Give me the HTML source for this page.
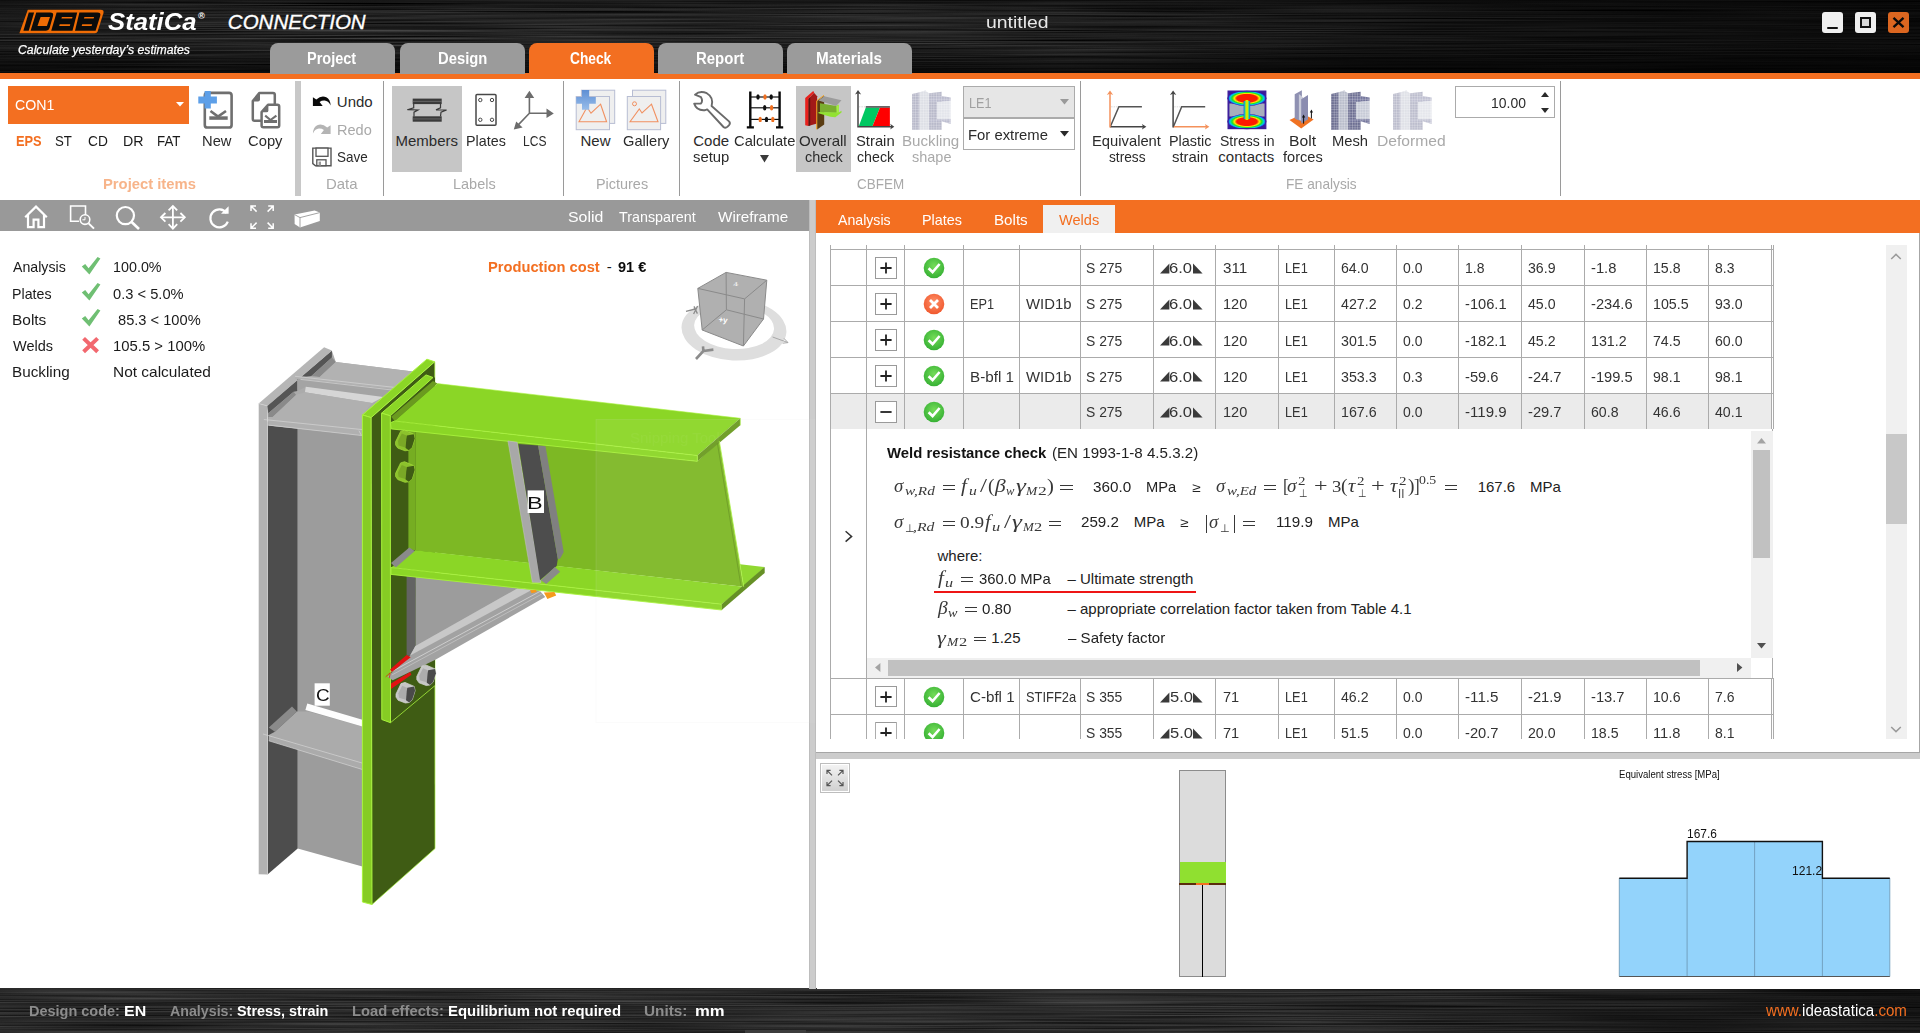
<!DOCTYPE html>
<html lang="en"><head><meta charset="utf-8"><title>IDEA StatiCa Connection - untitled</title>
<style>
html,body{margin:0;padding:0;background:#fff;}
body{width:1920px;height:1033px;overflow:hidden;font-family:"Liberation Sans",sans-serif;}
#app{position:relative;width:1920px;height:1033px;overflow:hidden;background:#fff;}
.t{position:absolute;white-space:nowrap;line-height:1;transform-origin:0 0;}
.b{position:absolute;box-sizing:border-box;}
svg{overflow:visible;}
</style></head><body><div id="app">
<svg class="b" style="left:0;top:0" width="1920" height="74" viewBox="0 0 1920 74" preserveAspectRatio="none">
<defs>
<filter id="brush" color-interpolation-filters="sRGB" x="0" y="0" width="100%" height="100%"><feTurbulence type="fractalNoise" baseFrequency="0.004 0.7" numOctaves="2" seed="7"/><feColorMatrix type="matrix" values="0.2 0.2 0.2 0 -0.16  0.2 0.2 0.2 0 -0.16  0.2 0.2 0.2 0 -0.16  0 0 0 0 1"/></filter>
<linearGradient id="tbg" x1="0" x2="1" y1="0" y2="0"><stop offset="0" stop-color="#000" stop-opacity="0.25"/><stop offset="0.1" stop-color="#000" stop-opacity="0.05"/><stop offset="0.55" stop-color="#000" stop-opacity="0.08"/><stop offset="0.75" stop-color="#000" stop-opacity="0.5"/><stop offset="1" stop-color="#000" stop-opacity="0.68"/></linearGradient>
<linearGradient id="tbv" x1="0" x2="0" y1="0" y2="1"><stop offset="0" stop-color="#000" stop-opacity="0.35"/><stop offset="0.18" stop-color="#000" stop-opacity="0"/><stop offset="0.6" stop-color="#000" stop-opacity="0"/><stop offset="1" stop-color="#000" stop-opacity="0.7"/></linearGradient>
<linearGradient id="sbg" x1="0" x2="1" y1="0" y2="0"><stop offset="0" stop-color="#000" stop-opacity="0.1"/><stop offset="0.68" stop-color="#000" stop-opacity="0.1"/><stop offset="0.85" stop-color="#000" stop-opacity="0.42"/><stop offset="1" stop-color="#000" stop-opacity="0.52"/></linearGradient>
</defs>
<rect width="1920" height="74" fill="#1c1c1c"/>
<rect width="1920" height="74" filter="url(#brush)"/>
<rect width="1920" height="74" fill="url(#tbg)"/><rect width="1920" height="74" fill="url(#tbv)"/>
</svg>
<div class="b" style="left:0px;top:73px;width:1920px;height:6px;background:#f36f21;"></div>
<svg class="b" style="left:0;top:988" width="1920" height="45" viewBox="0 0 1920 45" preserveAspectRatio="none">
<defs><filter id="brush2" color-interpolation-filters="sRGB" x="0" y="0" width="100%" height="100%"><feTurbulence type="fractalNoise" baseFrequency="0.004 0.7" numOctaves="2" seed="3"/><feColorMatrix type="matrix" values="0.2 0.2 0.2 0 -0.12  0.2 0.2 0.2 0 -0.12  0.2 0.2 0.2 0 -0.12  0 0 0 0 1"/></filter></defs>
<rect width="1920" height="45" fill="#141414"/><rect width="1920" height="45" filter="url(#brush2)"/>
<rect width="1920" height="45" fill="url(#sbg)"/>
</svg>
<div class="b" style="left:270px;top:43px;width:125px;height:31px;background:#9b9b9b;border-radius:8px 8px 0 0;"></div>
<span class="t" style="left:307.33px;top:50.66px;font-size:16px;color:#fff;font-weight:700;transform:scaleX(0.9061);">Project</span>
<div class="b" style="left:400px;top:43px;width:125px;height:31px;background:#9b9b9b;border-radius:8px 8px 0 0;"></div>
<span class="t" style="left:438.31px;top:50.66px;font-size:16px;color:#fff;font-weight:700;transform:scaleX(0.9243);">Design</span>
<div class="b" style="left:529px;top:43px;width:125px;height:31px;background:#f36f21;border-radius:8px 8px 0 0;"></div>
<span class="t" style="left:570.44px;top:50.66px;font-size:16px;color:#fff;font-weight:700;transform:scaleX(0.8590);">Check</span>
<div class="b" style="left:658px;top:43px;width:125px;height:31px;background:#9b9b9b;border-radius:8px 8px 0 0;"></div>
<span class="t" style="left:696.30px;top:50.66px;font-size:16px;color:#fff;font-weight:700;transform:scaleX(0.9346);">Report</span>
<div class="b" style="left:787px;top:43px;width:125px;height:31px;background:#9b9b9b;border-radius:8px 8px 0 0;"></div>
<span class="t" style="left:816.28px;top:50.66px;font-size:16px;color:#fff;font-weight:700;transform:scaleX(0.9521);">Materials</span>
<span class="t" style="left:985.74px;top:14.11px;font-size:17px;color:#e8e8e8;transform:scaleX(1.1403);">untitled</span>
<div class="b" style="left:1822px;top:12px;width:21px;height:21px;background:#efefef;border-radius:3px;"></div>
<div class="b" style="left:1827px;top:27px;width:11px;height:2.4px;background:#111;border-radius:1px;"></div>
<div class="b" style="left:1855px;top:12px;width:21px;height:21px;background:#efefef;border-radius:3px;"></div>
<div class="b" style="left:1860px;top:17px;width:11px;height:11px;background:#d9d9d9;border:2px solid #111;border-top-width:2.6px;"></div>
<div class="b" style="left:1888px;top:12px;width:21px;height:21px;background:#db6620;border-radius:3px;"></div>
<svg class="b" style="left:1888px;top:12px;" width="21" height="21" viewBox="0 0 21 21"><path d="M5.5 5.8 L15.5 15.2 M15.5 5.8 L5.5 15.2" stroke="#0a0a0a" stroke-width="2.3" fill="none"/></svg>
<svg class="b" style="left:0px;top:0px;" width="120" height="40" viewBox="0 0 120 40"><path d="M27.8 9.8 H100.6 Q104.4 9.8 103.4 13.2 L97.6 31.6 Q96.9 33.3 95 33.3 H19.4 Z" fill="#ef6c05"/>
<g fill="#0b0b0b"><path d="M28.75 12.6 H34.1 L28.75 30.75 H23.4 Z"/>
<path d="M36.25 12.6 H50 Q54 12.6 53 16 L49.6 28 Q48.8 30.75 46 30.75 H30.6 Z"/>
<path d="M56.6 12.6 H77.2 L72.5 30.75 H51.25 Z"/>
<path d="M79.4 12.6 H97.4 Q101.2 12.6 100.2 16 L95.6 30.75 H75 Z"/></g>
<g fill="#ef6c05"><path d="M40.6 17 H50 L46.9 26.1 H37.5 Z"/>
<path d="M61.9 17 H72.5 L72.1 18.5 H61.4 Z M59.7 24.2 H70.3 L69.8 26.1 H59.2 Z"/>
<path d="M84.4 17 H94.1 L93.6 18.5 H83.9 Z M82.2 24.2 H92.2 L91.6 26.1 H81.7 Z"/></g></svg>
<span class="t" style="left:107.69px;top:9.86px;font-size:24.5px;color:#fff;font-weight:700;font-style:italic;transform:scaleX(1.0493);">StatiCa</span>
<span class="t" style="left:198.00px;top:11.88px;font-size:9px;color:#fff;font-weight:700;font-style:italic;">®</span>
<span class="t" style="left:227.87px;top:11.95px;font-size:20.5px;color:#fff;font-style:italic;-webkit-text-stroke:0.35px #fff;">CONNECTION</span>
<span class="t" style="left:18.32px;top:43.59px;font-size:12.3px;color:#fff;font-style:italic;transform:scaleX(0.9953);-webkit-text-stroke:0.25px #fff;">Calculate yesterday’s estimates</span>
<div class="b" style="left:0px;top:79px;width:1920px;height:117px;background:#fff;"></div>
<div class="b" style="left:0px;top:196px;width:1920px;height:4px;background:#fff;"></div>
<div class="b" style="left:295px;top:81px;width:6px;height:115px;background:#c8c8c8;"></div>
<div class="b" style="left:383px;top:81px;width:1px;height:115px;background:#9a9a9a;"></div>
<div class="b" style="left:563px;top:81px;width:1px;height:115px;background:#9a9a9a;"></div>
<div class="b" style="left:679px;top:81px;width:1px;height:115px;background:#9a9a9a;"></div>
<div class="b" style="left:1080px;top:81px;width:1px;height:115px;background:#9a9a9a;"></div>
<div class="b" style="left:1560px;top:81px;width:1px;height:115px;background:#9a9a9a;"></div>
<div class="b" style="left:8px;top:86px;width:181px;height:38px;background:#f36f21;"></div>
<span class="t" style="left:15.28px;top:97.08px;font-size:15.5px;color:#fff;transform:scaleX(0.9152);">CON1</span>
<svg class="b" style="left:176px;top:102px;" width="8" height="5" viewBox="0 0 8 5"><path d="M0 0 H8 L4 4.5 Z" fill="#fff"/></svg>
<span class="t" style="left:15.84px;top:133.10px;font-size:15px;color:#f36f21;font-weight:700;transform:scaleX(0.8549);">EPS</span>
<span class="t" style="left:55.40px;top:133.10px;font-size:15px;color:#1a1a1a;transform:scaleX(0.8819);">ST</span>
<span class="t" style="left:87.80px;top:133.10px;font-size:15px;color:#1a1a1a;transform:scaleX(0.9165);">CD</span>
<span class="t" style="left:122.83px;top:133.10px;font-size:15px;color:#1a1a1a;transform:scaleX(0.9473);">DR</span>
<span class="t" style="left:156.91px;top:133.10px;font-size:15px;color:#1a1a1a;transform:scaleX(0.8866);">FAT</span>
<span class="t" style="left:202.49px;top:133.10px;font-size:15px;color:#2b2b2b;transform:scaleX(0.9822);">New</span>
<span class="t" style="left:248.25px;top:133.10px;font-size:15px;color:#2b2b2b;transform:scaleX(0.9846);">Copy</span>
<span class="t" style="left:102.51px;top:175.80px;font-size:15px;color:#f7b48a;font-weight:700;transform:scaleX(0.9861);">Project items</span>
<span class="t" style="left:336.85px;top:93.50px;font-size:15px;color:#2b2b2b;">Undo</span>
<span class="t" style="left:336.81px;top:121.50px;font-size:15px;color:#a9a9a9;transform:scaleX(0.9706);">Redo</span>
<span class="t" style="left:337.39px;top:149.20px;font-size:15px;color:#2b2b2b;transform:scaleX(0.8983);">Save</span>
<span class="t" style="left:326.48px;top:175.80px;font-size:15px;color:#a9a9a9;transform:scaleX(0.9949);">Data</span>
<div class="b" style="left:392px;top:86px;width:70px;height:86px;background:#c6c6c6;"></div>
<span class="t" style="left:395.47px;top:133.10px;font-size:15px;color:#2b2b2b;">Members</span>
<span class="t" style="left:466.33px;top:133.10px;font-size:15px;color:#2b2b2b;transform:scaleX(0.9545);">Plates</span>
<span class="t" style="left:522.71px;top:133.10px;font-size:15px;color:#2b2b2b;transform:scaleX(0.8034);">LCS</span>
<span class="t" style="left:453.41px;top:175.80px;font-size:15px;color:#a9a9a9;transform:scaleX(0.9663);">Labels</span>
<span class="t" style="left:580.47px;top:133.10px;font-size:15px;color:#2b2b2b;">New</span>
<span class="t" style="left:623.26px;top:133.10px;font-size:15px;color:#2b2b2b;transform:scaleX(0.9758);">Gallery</span>
<span class="t" style="left:596.12px;top:175.80px;font-size:15px;color:#a9a9a9;transform:scaleX(0.9616);">Pictures</span>
<span class="t" style="left:693.24px;top:133.10px;font-size:15px;color:#2b2b2b;">Code</span>
<span class="t" style="left:692.59px;top:148.90px;font-size:15px;color:#2b2b2b;transform:scaleX(0.9903);">setup</span>
<span class="t" style="left:734.45px;top:133.10px;font-size:15px;color:#2b2b2b;transform:scaleX(0.9819);">Calculate</span>
<svg class="b" style="left:760.3px;top:155.2px;" width="9" height="7.5" viewBox="0 0 9 7.5"><path d="M0 0 H9 L4.5 7.5 Z" fill="#3a3a3a"/></svg>
<div class="b" style="left:796px;top:86px;width:55px;height:86px;background:#c6c6c6;"></div>
<span class="t" style="left:799.29px;top:133.10px;font-size:15px;color:#2b2b2b;transform:scaleX(1.0044);">Overall</span>
<span class="t" style="left:804.79px;top:148.90px;font-size:15px;color:#2b2b2b;transform:scaleX(0.9619);">check</span>
<span class="t" style="left:855.83px;top:133.10px;font-size:15px;color:#2b2b2b;transform:scaleX(0.9859);">Strain</span>
<span class="t" style="left:856.90px;top:148.90px;font-size:15px;color:#2b2b2b;transform:scaleX(0.9464);">check</span>
<span class="t" style="left:902.26px;top:133.10px;font-size:15px;color:#a9a9a9;transform:scaleX(1.0092);">Buckling</span>
<span class="t" style="left:911.60px;top:148.90px;font-size:15px;color:#a9a9a9;transform:scaleX(0.9652);">shape</span>
<span class="t" style="left:857.32px;top:175.80px;font-size:15px;color:#a9a9a9;transform:scaleX(0.8969);">CBFEM</span>
<div class="b" style="left:963px;top:86px;width:112px;height:32px;background:#e6e6e6;border:1px solid #ababab;"></div>
<span class="t" style="left:968.56px;top:94.80px;font-size:15px;color:#a0a0a0;transform:scaleX(0.8412);">LE1</span>
<svg class="b" style="left:1060px;top:99px;" width="9" height="5.5" viewBox="0 0 9 5.5"><path d="M0 0 H9 L4.5 5.5 Z" fill="#9a9a9a"/></svg>
<div class="b" style="left:963px;top:118px;width:112px;height:32px;background:#fff;border:1px solid #ababab;"></div>
<span class="t" style="left:968.38px;top:126.80px;font-size:15px;color:#2b2b2b;transform:scaleX(0.9892);">For extreme</span>
<svg class="b" style="left:1060px;top:131px;" width="9" height="5.5" viewBox="0 0 9 5.5"><path d="M0 0 H9 L4.5 5.5 Z" fill="#2a2a2a"/></svg>
<span class="t" style="left:1091.79px;top:133.10px;font-size:15px;color:#2b2b2b;transform:scaleX(0.9839);">Equivalent</span>
<span class="t" style="left:1108.62px;top:148.90px;font-size:15px;color:#2b2b2b;transform:scaleX(0.9143);">stress</span>
<span class="t" style="left:1168.52px;top:133.10px;font-size:15px;color:#2b2b2b;transform:scaleX(0.9611);">Plastic</span>
<span class="t" style="left:1171.59px;top:148.90px;font-size:15px;color:#2b2b2b;transform:scaleX(0.9918);">strain</span>
<span class="t" style="left:1219.86px;top:133.10px;font-size:15px;color:#2b2b2b;transform:scaleX(0.9366);">Stress in</span>
<span class="t" style="left:1218.36px;top:148.90px;font-size:15px;color:#2b2b2b;">contacts</span>
<span class="t" style="left:1288.71px;top:133.10px;font-size:15px;color:#2b2b2b;transform:scaleX(1.0446);">Bolt</span>
<span class="t" style="left:1282.59px;top:148.90px;font-size:15px;color:#2b2b2b;transform:scaleX(0.9728);">forces</span>
<span class="t" style="left:1332.29px;top:133.10px;font-size:15px;color:#2b2b2b;transform:scaleX(0.9833);">Mesh</span>
<span class="t" style="left:1377.32px;top:133.10px;font-size:15px;color:#a9a9a9;transform:scaleX(1.0430);">Deformed</span>
<span class="t" style="left:1285.58px;top:175.80px;font-size:15px;color:#a9a9a9;transform:scaleX(0.9108);">FE analysis</span>
<div class="b" style="left:1455px;top:86px;width:100px;height:32px;background:#fff;border:1px solid #ababab;"></div>
<span class="t" style="left:1491.34px;top:94.80px;font-size:15px;color:#2b2b2b;transform:scaleX(0.9300);">10.00</span>
<svg class="b" style="left:1540.5px;top:92px;" width="8" height="5" viewBox="0 0 8 5"><path d="M0 5 H8 L4 0 Z" fill="#2a2a2a"/></svg>
<svg class="b" style="left:1540.5px;top:107.5px;" width="8" height="5" viewBox="0 0 8 5"><path d="M0 0 H8 L4 5 Z" fill="#2a2a2a"/></svg>
<svg class="b" style="left:0;top:0" width="1920" height="1033" viewBox="0 0 1920 1033"><rect x="204.8" y="92.9" width="26.8" height="34.6" rx="2.6" fill="#fff" stroke="#6f6f6f" stroke-width="2.6"/><path d="M210.5 111 L218 116.6 L226 111" fill="none" stroke="#6f6f6f" stroke-width="2.6"/><rect x="209.3" y="116.3" width="18.4" height="3.5" fill="#6f6f6f"/><path d="M204.6 90.9 H210.8 V96.6 H216.9 V103.4 H210.8 V108.6 H204.6 V103.4 H198.3 V96.6 H204.6 Z" fill="#5d9fe8"/><path d="M259.5 92.9 H273 Q274.8 92.9 274.8 94.7 V119 Q274.8 120.8 273 120.8 H254.6 Q252.8 120.8 252.8 119 V101 Z" fill="#fff" stroke="#6f6f6f" stroke-width="2.5" stroke-linejoin="round"/><path d="M253 101.5 L260 93.2 V99.5 Q260 101.5 258 101.5 Z" fill="#6f6f6f"/><path d="M268 104.7 H277.4 Q279.2 104.7 279.2 106.5 V125.4 Q279.2 127.2 277.4 127.2 H263.4 Q261.6 127.2 261.6 125.4 V112 Z" fill="#fff" stroke="#6f6f6f" stroke-width="2.5" stroke-linejoin="round"/><path d="M261.8 112.3 L268.4 105 V110.4 Q268.4 112.3 266.4 112.3 Z" fill="#6f6f6f"/><path d="M265.2 115.6 L270.5 120 L276.4 115.6" fill="none" stroke="#6f6f6f" stroke-width="2.1"/><rect x="264" y="120" width="13" height="3" fill="#6f6f6f"/><path d="M312.9 106 V97.2 L316.3 99.4 Q321.5 95 326.3 97.3 Q330.3 99.4 330.6 105.4 Q328.3 100.9 324.6 100.6 Q321.9 100.4 319.6 102 L322.7 106 Z" fill="#0a0a0a"/><path d="M330.6 134 V125.2 L327.2 127.4 Q322 123 317.2 125.3 Q313.2 127.4 312.9 133.4 Q315.2 128.9 318.9 128.6 Q321.6 128.4 323.9 130 L320.8 134 Z" fill="#b4b4b4"/><path d="M312.8 148.1 H331 V165.7 H315.5 L312.8 163.6 Z" fill="#fff" stroke="#555" stroke-width="1.4"/><rect x="316" y="148.1" width="12" height="8.2" fill="#fff" stroke="#555" stroke-width="1.3"/><rect x="316.8" y="159.8" width="9.2" height="5.9" fill="#fff" stroke="#555" stroke-width="1.3"/><rect x="318.6" y="161.6" width="2.4" height="4" fill="#999"/><rect x="412.7" y="98.6" width="29" height="5.5" fill="#3a3a3a"/><rect x="412.7" y="116.3" width="29" height="5.4" fill="#3a3a3a"/><rect x="412.7" y="100.9" width="29" height="0.7" fill="#777"/><rect x="412.7" y="118.6" width="29" height="0.7" fill="#777"/><path d="M413.7 104 V107.8 L407.4 109.7 L418 110 L414 112.2 V116.4 M440.5 104 V107.8 L436 109.8 L446.6 110 L441 112.2 L440.5 116.4" fill="none" stroke="#3a3a3a" stroke-width="1.2"/><rect x="476" y="94.6" width="20" height="30.6" rx="1" fill="none" stroke="#484848" stroke-width="1.5"/><circle cx="480.3" cy="100" r="1.7" fill="none" stroke="#484848" stroke-width="1"/><circle cx="492" cy="100" r="1.7" fill="none" stroke="#484848" stroke-width="1"/><circle cx="480.3" cy="119.8" r="1.7" fill="none" stroke="#484848" stroke-width="1"/><circle cx="492" cy="119.8" r="1.7" fill="none" stroke="#484848" stroke-width="1"/><path d="M529.4 113.3 V96 M529.4 113.3 H548 M529.4 113.3 L518.5 124.6" stroke="#6c6c6c" stroke-width="1.6" fill="none"/><path d="M529.4 90.8 L534.2 98 H524.6 Z M553.8 113.4 L546.5 118 V108.6 Z M513.8 129.6 L516.2 121.4 L522.6 127.6 Z" fill="#6c6c6c"/><rect x="581.4000000000001" y="90.2" width="33.3" height="33.2" fill="#efefef" stroke="#b7bdd3" stroke-width="1"/><rect x="576.2" y="96.5" width="33.3" height="33.2" fill="#efefef" stroke="#b7bdd3" stroke-width="1"/><path d="M579 121.7 L587 107.3 L591 113.2 L600.6 104.2 L606.6 121.7 Z" fill="none" stroke="#f19060" stroke-width="1.1"/><defs><linearGradient id="bp" x1="0" y1="0" x2="0" y2="1"><stop offset="0" stop-color="#5f8fd4"/><stop offset="1" stop-color="#98bdea"/></linearGradient></defs><path d="M582 90.1 H589.2 V97 H595.8 V103.8 H589.2 V109.8 H582 V103.8 H576.2 V97 H582 Z" fill="url(#bp)"/><rect x="632.5" y="90.2" width="33.3" height="33.2" fill="#efefef" stroke="#b7bdd3" stroke-width="1"/><rect x="627.3" y="96.5" width="33.3" height="33.2" fill="#efefef" stroke="#b7bdd3" stroke-width="1"/><path d="M630 121.7 L639.3 109 L642 113 L651.5 104.2 L658 121.7 Z" fill="none" stroke="#f19060" stroke-width="1.1"/><circle cx="634.5" cy="103.8" r="2" fill="none" stroke="#f19060" stroke-width="1"/><path d="M706.8 93.2 Q700 90.2 695 94.6 L701 97.2 Q703.2 101 700.8 103.6 L694.2 103.6 Q696.6 110.8 704.6 110.2 Q706 110 707.2 109.4 L723.5 127 Q725.5 128.6 727.6 126.6 L729.3 124.8 Q730.6 123 729 121.4 L711.6 106 Q714 97.4 706.8 93.2 Z" fill="#fff" stroke="#6a6a6a" stroke-width="1.9" stroke-linejoin="round"/><path d="M750.3 91.6 V127.4 M779.6 91.6 V127.4" stroke="#0a0a0a" stroke-width="2.4"/><path d="M746.8 127.3 H753.9 M776 127.3 H783.2" stroke="#0a0a0a" stroke-width="2.2"/><path d="M750.3 97 H779.6" stroke="#111" stroke-width="1.2"/><path d="M750.3 107.8 H779.6" stroke="#111" stroke-width="1.2"/><path d="M750.3 119.4 H779.6" stroke="#111" stroke-width="1.2"/><ellipse cx="758" cy="97" rx="1.7" ry="2.7" fill="#111"/><ellipse cx="765" cy="97" rx="1.7" ry="2.7" fill="#f07020"/><ellipse cx="771.2" cy="97" rx="1.7" ry="2.7" fill="#111"/><ellipse cx="764.7" cy="107.8" rx="1.7" ry="2.7" fill="#111"/><ellipse cx="771.6" cy="107.8" rx="1.7" ry="2.7" fill="#f07020"/><ellipse cx="760.2" cy="119.4" rx="1.7" ry="2.7" fill="#f07020"/><ellipse cx="766.5" cy="119.4" rx="1.7" ry="2.7" fill="#111"/><ellipse cx="772.8" cy="119.4" rx="1.7" ry="2.7" fill="#f07020"/><polygon points="808.3,98.8 814.0,92.8 817.1,96.2 817.1,123.6 808.3,126.0" fill="#a21a18"/><polygon points="808.3,98.8 810.2,96.9 810.2,125.4 808.3,126.0" fill="#5c1512"/><polygon points="805.2,97.9 813.2,91.1 814.2,92.4 808.3,98.8 808.3,126.0 805.2,125.2" fill="#e8221e"/><polygon points="817.1,101.0 824.2,96.0 824.2,124.5 817.1,129.4" fill="#5a3c12"/><polyline points="816.7,129.4 816.7,100.8 824.0,95.3" fill="none" stroke="#f0a020" stroke-width="1" /><polygon points="818.5,100.6 824.2,96.2 841.5,100.2 836.2,106.1" fill="#9c9c9c"/><polygon points="820.0,103.3 836.4,106.1 838.6,104.7 838.6,113.0 820.0,112.3" fill="#7aae30"/><polygon points="818.5,111.9 838.6,112.5 841.5,110.8 841.5,112.5 835.3,117.2 830.4,116.7 818.5,113.2" fill="#92e232"/><polygon points="836.3,106.1 838.9,104.5 838.9,112.6 836.6,113.0" fill="#a4f044"/><polygon points="858.9,126.0 865.8,107.5 880.0,107.5 872.6,126.0" fill="#00c862"/><polygon points="872.6,126.0 880.0,107.5 889.9,107.5 889.9,126.0" fill="#ff0000"/><polyline points="858.9,106.8 865.4,106.8" fill="none" stroke="#cfcfcf" stroke-width="0.8" stroke-dasharray="1.5 1"/><polyline points="865.8,106.9 889.9,106.9" fill="none" stroke="#555" stroke-width="1.6" /><polyline points="858.0,92.2 858.0,126.7 892.0,126.7" fill="none" stroke="#444" stroke-width="1.5" /><polygon points="858.0,90.1 861.2,94.4 858.0,93.3 855.0,94.4" fill="#444"/><polygon points="894.3,126.7 890.2,123.8 891.2,126.7 890.2,129.6" fill="#444"/><defs><pattern id="gr" width="2.6" height="2.6" patternUnits="userSpaceOnUse"><path d="M0 0 H2.6 M0 0 V2.6" stroke="#fff" stroke-width="0.45" fill="none"/></pattern></defs><g opacity="1"><polygon points="1331.0,94.1 1338.7,92.3 1338.7,129.8 1331.0,129.8" fill="#6d6f92"/><polygon points="1331.0,94.1 1338.7,92.3 1338.7,129.8 1331.0,129.8" fill="url(#gr)"/><polygon points="1338.7,92.3 1344.8,90.2 1344.8,91.3 1348.1,93.2 1348.1,129.8 1338.7,129.8" fill="#b9bdcb"/><polygon points="1338.7,92.3 1344.8,90.2 1344.8,91.3 1348.1,93.2 1348.1,129.8 1338.7,129.8" fill="url(#gr)"/><polygon points="1348.1,93.2 1360.7,91.8 1360.7,129.8 1348.1,129.8" fill="#6d6f92"/><polygon points="1348.1,93.2 1360.7,91.8 1360.7,129.8 1348.1,129.8" fill="url(#gr)"/><polygon points="1356.0,102.1 1369.6,100.7 1369.6,119.4 1356.0,119.4" fill="#c6cad6"/><polygon points="1356.0,102.1 1369.6,100.7 1369.6,119.4 1356.0,119.4" fill="url(#gr)"/><polygon points="1349.0,98.4 1360.7,96.0 1369.6,97.4 1369.6,100.7 1355.6,102.1 1349.0,101.2" fill="#74769c"/><polygon points="1349.0,98.4 1360.7,96.0 1369.6,97.4 1369.6,100.7 1355.6,102.1 1349.0,101.2" fill="url(#gr)"/><polygon points="1349.0,119.4 1356.0,119.4 1369.6,119.0 1369.6,124.1 1360.7,121.3 1349.0,122.3" fill="#74769c"/><polygon points="1349.0,119.4 1356.0,119.4 1369.6,119.0 1369.6,124.1 1360.7,121.3 1349.0,122.3" fill="url(#gr)"/></g><g opacity="0.45"><polygon points="1393.0,94.1 1400.7,92.3 1400.7,129.8 1393.0,129.8" fill="#6d6f92"/><polygon points="1393.0,94.1 1400.7,92.3 1400.7,129.8 1393.0,129.8" fill="url(#gr)"/><polygon points="1400.7,92.3 1406.8,90.2 1406.8,91.3 1410.1,93.2 1410.1,129.8 1400.7,129.8" fill="#b9bdcb"/><polygon points="1400.7,92.3 1406.8,90.2 1406.8,91.3 1410.1,93.2 1410.1,129.8 1400.7,129.8" fill="url(#gr)"/><polygon points="1410.1,93.2 1422.7,91.8 1422.7,129.8 1410.1,129.8" fill="#6d6f92"/><polygon points="1410.1,93.2 1422.7,91.8 1422.7,129.8 1410.1,129.8" fill="url(#gr)"/><polygon points="1418.0,102.1 1431.6,100.7 1431.6,119.4 1418.0,119.4" fill="#c6cad6"/><polygon points="1418.0,102.1 1431.6,100.7 1431.6,119.4 1418.0,119.4" fill="url(#gr)"/><polygon points="1411.0,98.4 1422.7,96.0 1431.6,97.4 1431.6,100.7 1417.6,102.1 1411.0,101.2" fill="#74769c"/><polygon points="1411.0,98.4 1422.7,96.0 1431.6,97.4 1431.6,100.7 1417.6,102.1 1411.0,101.2" fill="url(#gr)"/><polygon points="1411.0,119.4 1418.0,119.4 1431.6,119.0 1431.6,124.1 1422.7,121.3 1411.0,122.3" fill="#74769c"/><polygon points="1411.0,119.4 1418.0,119.4 1431.6,119.0 1431.6,124.1 1422.7,121.3 1411.0,122.3" fill="url(#gr)"/></g><g opacity="0.48"><polygon points="912.0,94.1 919.7,92.3 919.7,129.8 912.0,129.8" fill="#6d6f92"/><polygon points="912.0,94.1 919.7,92.3 919.7,129.8 912.0,129.8" fill="url(#gr)"/><polygon points="919.7,92.3 925.8,90.2 925.8,91.3 929.1,93.2 929.1,129.8 919.7,129.8" fill="#b9bdcb"/><polygon points="919.7,92.3 925.8,90.2 925.8,91.3 929.1,93.2 929.1,129.8 919.7,129.8" fill="url(#gr)"/><polygon points="929.1,93.2 941.7,91.8 941.7,129.8 929.1,129.8" fill="#6d6f92"/><polygon points="929.1,93.2 941.7,91.8 941.7,129.8 929.1,129.8" fill="url(#gr)"/><polygon points="937.0,102.1 950.6,100.7 950.6,119.4 937.0,119.4" fill="#c6cad6"/><polygon points="937.0,102.1 950.6,100.7 950.6,119.4 937.0,119.4" fill="url(#gr)"/><polygon points="930.0,98.4 941.7,96.0 950.6,97.4 950.6,100.7 936.6,102.1 930.0,101.2" fill="#74769c"/><polygon points="930.0,98.4 941.7,96.0 950.6,97.4 950.6,100.7 936.6,102.1 930.0,101.2" fill="url(#gr)"/><polygon points="930.0,119.4 937.0,119.4 950.6,119.0 950.6,124.1 941.7,121.3 930.0,122.3" fill="#74769c"/><polygon points="930.0,119.4 937.0,119.4 950.6,119.0 950.6,124.1 941.7,121.3 930.0,122.3" fill="url(#gr)"/></g><polyline points="1111.1,106.8 1118.4,106.8" fill="none" stroke="#cfcfcf" stroke-width="0.8" stroke-dasharray="1.5 1"/><polyline points="1110.5,126.2 1118.9,106.8 1141.9,106.8" fill="none" stroke="#555" stroke-width="1.5" /><polyline points="1110.0,126.8 1143.7,126.8" fill="none" stroke="#444" stroke-width="1.5" /><polygon points="1146.4,126.8 1141.9,124.0 1143.0,126.8 1141.9,129.6" fill="#444"/><polyline points="1110.0,127.5 1110.0,93.2" fill="none" stroke="#f4915b" stroke-width="1.5" /><polygon points="1110.0,90.6 1113.2,94.9 1110.0,93.8 1106.8,94.9" fill="#f4915b"/><polyline points="1174.2,106.8 1181.2,106.8" fill="none" stroke="#cfcfcf" stroke-width="0.8" stroke-dasharray="1.5 1"/><polyline points="1173.6,126.2 1181.7,106.8 1205.2,106.8" fill="none" stroke="#555" stroke-width="1.5" /><polyline points="1173.1,126.8 1206.6,126.8" fill="none" stroke="#f4915b" stroke-width="1.5" /><polygon points="1209.4,126.8 1204.9,124.0 1206.0,126.8 1204.9,129.6" fill="#f4915b"/><polyline points="1173.1,127.5 1173.1,93.2" fill="none" stroke="#444" stroke-width="1.5" /><polygon points="1173.1,90.6 1176.3,94.9 1173.1,93.8 1169.9,94.9" fill="#444"/><defs><radialGradient id="hot" cx="0.5" cy="0.5" r="0.5"><stop offset="0" stop-color="#ff1a00"/><stop offset="0.52" stop-color="#ff1a00"/><stop offset="0.64" stop-color="#ffe800"/><stop offset="0.76" stop-color="#20e020"/><stop offset="0.87" stop-color="#00d0e0"/><stop offset="0.96" stop-color="#2040e0"/><stop offset="1" stop-color="#3a1a9a"/></radialGradient></defs><rect x="1228.1" y="91.1" width="37.7" height="37.5" fill="#3a1a9a"/><rect x="1229.4" y="103.5" width="35.2" height="13" fill="#a9aebc"/><ellipse cx="1246.9" cy="98.3" rx="19.5" ry="7.6" fill="url(#hot)"/><ellipse cx="1246.9" cy="121.6" rx="19.5" ry="7.6" fill="url(#hot)"/><rect x="1243.6" y="101" width="6.6" height="18" fill="#2060e0"/><rect x="1244.4" y="101" width="5" height="18" fill="#20d8a0"/><rect x="1245.5" y="100" width="2.8" height="20" fill="#d8e800"/><rect x="1228.1" y="91.1" width="37.7" height="37.5" fill="none" stroke="#3a1a9a" stroke-width="1.2"/><polygon points="1289.5,120.0 1301.2,128.6 1313.6,119.5 1303.1,113.7" fill="#f07222"/><polygon points="1294.7,94.2 1301.9,90.2 1301.9,121.4 1294.7,118.7" fill="#8f91b2"/><polygon points="1298.9,94.0 1303.1,97.5 1303.1,121.8 1298.9,119.5" fill="#c9cbd9"/><polygon points="1301.2,99.3 1308.0,94.9 1308.0,119.5 1301.2,123.4" fill="#8a8cb0"/><polyline points="1303.6,123.7 1303.6,116.2" fill="none" stroke="#111" stroke-width="1" /><polygon points="1303.6,114.6 1305.2,117.6 1302.0,117.6" fill="#111"/><polyline points="1311.4,118.4 1311.4,111.1" fill="none" stroke="#111" stroke-width="1" /><polygon points="1311.4,109.4 1313.0,112.4 1309.8,112.4" fill="#111"/></svg>
<div class="b" style="left:0px;top:199.5px;width:809px;height:31.5px;background:#999999;"></div>
<div class="b" style="left:809px;top:199.5px;width:7.2px;height:789.5px;background:#cccccc;border-left:1px solid #bdbdbd;border-right:1px solid #bdbdbd;"></div>
<span class="t" style="left:568.28px;top:209.30px;font-size:15px;color:#fff;transform:scaleX(1.0566);">Solid</span>
<span class="t" style="left:619.28px;top:209.30px;font-size:15px;color:#fff;transform:scaleX(0.9540);">Transparent</span>
<span class="t" style="left:717.93px;top:209.30px;font-size:15px;color:#fff;transform:scaleX(1.0155);">Wireframe</span>
<svg class="b" style="left:0;top:0" width="820" height="240" viewBox="0 0 820 240"><path d="M25.2 217.2 L36 206.6 L46.8 217.2 M28 214.8 V227.2 H33.6 V219.6 H38.4 V227.2 H44 V214.8" stroke="#fff" fill="none" stroke-width="2.2" stroke-linejoin="miter"/><path d="M85.5 215 V206 H70.6 V221.2 H79" stroke="#fff" fill="none" stroke-width="1.6"/><circle cx="85" cy="219.6" r="4.8" stroke="#fff" fill="none" stroke-width="1.6"/><path d="M88.6 223.4 L94 228.6" stroke="#fff" fill="none" stroke-width="2"/><path d="M85 217 V219.8 H82.4" stroke="#fff" fill="none" stroke-width="1"/><circle cx="125.4" cy="215.6" r="8.6" stroke="#fff" fill="none" stroke-width="2.2"/><path d="M131.6 222 L139 229" stroke="#fff" fill="none" stroke-width="2.6"/><path d="M172.9 207 V227.6 M162 217.3 H183.8" stroke="#fff" fill="none" stroke-width="1.8"/><path d="M168.6 210.4 L172.9 206 L177.2 210.4 M168.6 224.2 L172.9 228.6 L177.2 224.2 M165.4 213 L161 217.3 L165.4 221.6 M180.4 213 L184.8 217.3 L180.4 221.6" stroke="#fff" fill="none" stroke-width="1.8"/><path d="M226.6 213 A9 9 0 1 0 227.8 221.6" stroke="#fff" fill="none" stroke-width="2.2"/><path d="M221 213.8 H228.6 V206.2 Z" fill="#fff"/><path d="M256.6 211.6 L251 206 M251 211 V206 H256 M267.6 211.6 L273.2 206 M268.2 206 H273.2 V211 M256.6 222.6 L251 228.2 M251 223.2 V228.2 H256 M267.6 222.6 L273.2 228.2 M268.2 228.2 H273.2 V223.2" stroke="#fff" fill="none" stroke-width="1.5"/><path d="M294.6 214.6 L314.6 210.4 L319.8 212.6 V221 L300 227.4 L294.6 224 Z" fill="#fff"/><path d="M294.6 214.6 L300 217.6 V227.4 M300 217.6 L319.8 212.6" stroke="#999" stroke-width="0.9" fill="none"/></svg>
<span class="t" style="left:12.97px;top:259.30px;font-size:15px;color:#1a1a1a;transform:scaleX(0.9442);">Analysis</span>
<span class="t" style="left:112.91px;top:259.30px;font-size:15px;color:#1a1a1a;transform:scaleX(0.9554);">100.0%</span>
<svg class="b" style="left:80px;top:256.0px;" width="22" height="20" viewBox="0 0 22 20"><path d="M1.8 10.6 L5.2 8 L8.6 12.2 L17.6 1 L20.4 2.6 L9.4 18.6 Z" fill="#6fbf73"/></svg>
<span class="t" style="left:11.83px;top:285.50px;font-size:15px;color:#1a1a1a;transform:scaleX(0.9470);">Plates</span>
<span class="t" style="left:112.93px;top:285.50px;font-size:15px;color:#1a1a1a;transform:scaleX(0.9787);">0.3 &lt; 5.0%</span>
<svg class="b" style="left:80px;top:282.2px;" width="22" height="20" viewBox="0 0 22 20"><path d="M1.8 10.6 L5.2 8 L8.6 12.2 L17.6 1 L20.4 2.6 L9.4 18.6 Z" fill="#6fbf73"/></svg>
<span class="t" style="left:11.73px;top:311.70px;font-size:15px;color:#1a1a1a;transform:scaleX(1.0293);">Bolts</span>
<span class="t" style="left:117.86px;top:311.70px;font-size:15px;color:#1a1a1a;transform:scaleX(0.9765);">85.3 &lt; 100%</span>
<svg class="b" style="left:80px;top:308.4px;" width="22" height="20" viewBox="0 0 22 20"><path d="M1.8 10.6 L5.2 8 L8.6 12.2 L17.6 1 L20.4 2.6 L9.4 18.6 Z" fill="#6fbf73"/></svg>
<span class="t" style="left:12.94px;top:337.90px;font-size:15px;color:#1a1a1a;transform:scaleX(0.9682);">Welds</span>
<span class="t" style="left:112.87px;top:337.90px;font-size:15px;color:#1a1a1a;transform:scaleX(0.9911);">105.5 &gt; 100%</span>
<svg class="b" style="left:80px;top:334.6px;" width="22" height="20" viewBox="0 0 22 20"><path d="M3.6 3.4 L17.6 16.8 M17.6 3.4 L3.6 16.8" stroke="#f2686f" stroke-width="4" fill="none"/></svg>
<span class="t" style="left:11.75px;top:364.10px;font-size:15px;color:#1a1a1a;transform:scaleX(1.0184);">Buckling</span>
<span class="t" style="left:112.53px;top:364.10px;font-size:15px;color:#1a1a1a;transform:scaleX(1.0306);">Not calculated</span>
<span class="t" style="left:488.42px;top:259.30px;font-size:15px;color:#f36f21;font-weight:700;transform:scaleX(0.9789);">Production cost</span>
<span class="t" style="left:606.70px;top:259.30px;font-size:15px;color:#1a1a1a;">-</span>
<span class="t" style="left:618.00px;top:259.30px;font-size:15px;color:#0a0a0a;font-weight:700;transform:scaleX(0.9680);">91 €</span>
<svg class="b" style="left:0;top:0" width="816" height="988" viewBox="0 0 816 988"><g shape-rendering="geometricPrecision"><polygon points="297.7,425 362.4,432 362.4,866.4 297.7,848.6" fill="#9c9c9c"/><polygon points="267.5,421.5 297.7,425.5 297.7,848.6 267.5,874.5" fill="#4d4d4d"/><polygon points="258.7,403.6 267.5,405.9 267.5,874.5 258.7,874.2" fill="#b2b2b2"/><polygon points="258.7,403.6 324.1,347.3 331.9,350.5 267.4,405.9" fill="#b6b6b6"/><polyline points="258.7,403.6 267.5,405.9 267.5,874.5" fill="none" stroke="#d4d4d4" stroke-width="0.7"/><polygon points="267.4,405.9 331.9,350.8 335.8,362.1 413.0,371.4 362.4,414.9 362.4,435.5 268.3,425.4" fill="#ababab"/><polygon points="267.4,405.9 331.9,350.8 331.9,357.4 311.4,376.1 297.4,378.7 297.4,390.9 293.6,391.8 268.3,413.2" fill="#555"/><polygon points="311.4,376.1 331.9,357.4 335.8,362.1 319.7,376.9" fill="#8a8a8a"/><polygon points="295.0,376.3 319.7,376.9 335.8,362.1 413.0,371.4 397.3,389.7 295.0,378.7" fill="#b2b2b2"/><polygon points="297.4,378.7 397.3,389.7 382.5,397.5 305.8,387.1 297.4,390.9" fill="#a4a4a4"/><polygon points="305.8,386.7 383.3,397.0 372.0,403.1 304.9,392.3" fill="#d6d6d6"/><polygon points="268.3,413.2 293.6,391.8 296.2,394.9 272.7,417.0 268.3,417.0" fill="#8a8a8a"/><polygon points="272.7,417.0 296.2,394.7 304.9,392.3 372.0,403.1 362.4,414.9 362.4,435.5 268.3,425.4 268.3,417.0" fill="#b0b0b0"/><polyline points="295.0,376.3 398.1,387.8" fill="none" stroke="#d4d4d4" stroke-width="0.7"/><polyline points="300.5,379.4 396.4,390.5" fill="none" stroke="#d4d4d4" stroke-width="0.7"/><polyline points="263.9,419.5 362.4,429.6" fill="none" stroke="#d4d4d4" stroke-width="0.7"/><polyline points="268.3,425.1 361.5,435.5 358.9,430.6" fill="none" stroke="#d4d4d4" stroke-width="0.7"/><polygon points="268.8,727.6 292.0,706.6 296.9,711.4 274.9,731.7" fill="#8a8a8a"/><polygon points="274.9,731.7 296.9,711.4 308.2,711.4 362.4,726.6 362.4,769.5 268.8,740.8 268.8,735.0" fill="#ababab"/><polygon points="307.3,703.4 362.4,719.7 362.4,726.6 305.4,710" fill="#fdfdfd"/><polyline points="263.0,734.0 362.4,763.1" fill="none" stroke="#d4d4d4" stroke-width="0.7"/><polyline points="268.8,740.8 362.4,769.5" fill="none" stroke="#d4d4d4" stroke-width="0.7"/><polygon points="371.1,417.6 434.8,361.8 435,848.6 372,904.5" fill="#3f5c14"/><polygon points="362.4,414.9 426.9,359.2 434.7,361.8 371.1,417.6" fill="#8bd626" stroke="#a8f23c" stroke-width="1.0" stroke-linejoin="round"/><polygon points="362.4,414.9 371.1,417.6 372,904.5 362.4,902" fill="#86cc24" stroke="#a8f23c" stroke-width="1.0"/><polyline points="434.8,361.8 435,848.6 372,904.5" fill="none" stroke="#a8f23c" stroke-width="0.7"/><polygon points="390.3,415.8 433,377.5 435,377.5 435,685.6 390.5,722.7" fill="#3f5c14"/><polygon points="381.6,413.2 426.0,374.9 433.0,377.5 390.3,415.8" fill="#8bd626" stroke="#a8f23c" stroke-width="1.0" stroke-linejoin="round"/><polygon points="381.6,413.2 390.3,415.8 390.5,722.7 381.8,719.5" fill="#86cc24" stroke="#a8f23c" stroke-width="1.0"/><polyline points="390.5,722.7 435,685.6" fill="none" stroke="#a8f23c" stroke-width="0.8"/><polygon points="415.4,572 524.3,588.4 415.4,650.3" fill="#9c9c9c"/><polygon points="406.6,572 415.4,573 415.4,648.5 410.1,655.8 406.6,655.8" fill="#636363"/><polygon points="415.4,645.9 517.3,588.4 539.1,590.1 545.2,597.1 435.4,659.8 392.7,680.2 387.5,676.8 410.1,655.5" fill="#a2a2a2"/><polygon points="410.1,655.5 415.4,645.9 517.3,588.4 532.1,589.8" fill="#c8c8c8"/><polyline points="391.0,672.0 540.0,591.4" fill="none" stroke="#d8d8d8" stroke-width="0.8"/><polyline points="391.8,675.0 541.7,594.1" fill="none" stroke="#c8c8c8" stroke-width="0.7"/><polygon points="415.5,428 697.3,461.3 719.3,441.6 743.7,586.8 415.4,550.5" fill="#7db824"/><polygon points="408.4,429 415.6,430 415.6,550.5 408.4,549" fill="#76ad22"/><polygon points="391.2,416.7 433,381 437.4,383.4 394.7,421" fill="#6a9a1f"/><polygon points="394.7,421 437.4,383.6 740.3,418.3 697.3,455.5" fill="#8bd626"/><polygon points="697.3,455.5 740.3,418.3 740.3,425.3 697.3,461.3" fill="#6a9a1f"/><polygon points="390.3,422.8 394.7,421 697.3,455.5 697.3,461.3 391.2,428.9" fill="#8bd626" stroke="#a8f23c" stroke-width="0.9"/><polyline points="437.4,383.6 740.3,418.3 740.3,425.3" fill="none" stroke="#a8f23c" stroke-width="0.6"/><polygon points="740,564.3 764.7,567 743.7,586.8" fill="#8bd626"/><polygon points="391,567.5 415.4,550.3 743.7,586.8 721.7,604.2" fill="#8bd626"/><polygon points="391,563.1 409.3,547.4 414.8,550.9 395.7,567.5" fill="#8a8a8a"/><polygon points="391,567.5 721.7,604.2 721.7,610 391,574.4" fill="#8bd626" stroke="#a8f23c" stroke-width="0.9"/><polygon points="721.7,604.2 764.7,567 764.7,572.9 721.7,610" fill="#5e8a1a"/><polyline points="719.3,441 743.7,586.8" fill="none" stroke="#a8f23c" stroke-width="0.8"/><polyline points="717.4,443.4 741,586" fill="none" stroke="#5e8a1a" stroke-width="0.6"/><polygon points="507.9,440.9 517.2,442.3 540.9,582.6 532.3,582.2" fill="#a8a8a8" stroke="#c4c4c4" stroke-width="0.5" stroke-linejoin="round"/><polygon points="518.3,443.9 538.1,445.5 557.8,558.9 556.7,565.9 540.0,580.3" fill="#4d4d4d"/><polygon points="538.1,445.5 545.5,446.2 563.7,552.0 560.2,558.5 557.8,558.9" fill="#808080"/><polygon points="540.9,580.3 554.8,567.1 560.2,571.7 546.2,584.0" fill="#8a8a8a"/><polygon points="530.0,590.3 535.8,589.8 536.9,591.9 531.6,593.3" fill="#f59a1c"/><polygon points="543.9,592.6 554.4,591.9 556.2,595.6 547.4,598.9" fill="#f59a1c"/><g transform="translate(405,440.5)"><polygon points="-9.4,1.3 -4.4,-9.1 -0.4,-10.3 8.8,-6.3 9.7,-1.9 6.9,6.9 3.8,9.8 0,10.3 -7.2,7.6 -9.4,4.4" fill="#8cc22c" stroke="#a8e03c" stroke-width="0.7" stroke-linejoin="round"/><polygon points="-7,0.6 -3.2,-7 1.6,-5 1,7.2 -6.4,5" fill="#7aa826"/><polygon points="1.9,-5 8.8,-6.3 9.7,-1.9 6.9,6.9 3.8,9.8 0.6,7.6 1.3,-1.3" fill="#3f5c14"/></g><g transform="translate(405,472)"><polygon points="-9.4,1.3 -4.4,-9.1 -0.4,-10.3 8.8,-6.3 9.7,-1.9 6.9,6.9 3.8,9.8 0,10.3 -7.2,7.6 -9.4,4.4" fill="#8cc22c" stroke="#a8e03c" stroke-width="0.7" stroke-linejoin="round"/><polygon points="-7,0.6 -3.2,-7 1.6,-5 1,7.2 -6.4,5" fill="#7aa826"/><polygon points="1.9,-5 8.8,-6.3 9.7,-1.9 6.9,6.9 3.8,9.8 0.6,7.6 1.3,-1.3" fill="#3f5c14"/></g><polygon points="390.1,669.4 406.6,655.1 410.7,657.2 391.8,672.0" fill="#e21212"/><polygon points="391.0,683.4 410.1,672.0 411.4,674.7 391.0,689.0" fill="#e21212"/><polyline points="385.7,676.8 390.4,672.6 389.2,678.1" fill="none" stroke="#e21212" stroke-width="0.7"/><g transform="translate(426.2,675.2)"><polygon points="-9.4,1.3 -4.4,-9.1 -0.4,-10.3 8.8,-6.3 9.7,-1.9 6.9,6.9 3.8,9.8 0,10.3 -7.2,7.6 -9.4,4.4" fill="#c6c6c6" stroke="#d8d8d8" stroke-width="0.7" stroke-linejoin="round"/><polygon points="-7,0.6 -3.2,-7 1.6,-5 1,7.2 -6.4,5" fill="#adadad"/><polygon points="1.9,-5 8.8,-6.3 9.7,-1.9 6.9,6.9 3.8,9.8 0.6,7.6 1.3,-1.3" fill="#4a4a4a"/></g><g transform="translate(405.4,692.7)"><polygon points="-9.4,1.3 -4.4,-9.1 -0.4,-10.3 8.8,-6.3 9.7,-1.9 6.9,6.9 3.8,9.8 0,10.3 -7.2,7.6 -9.4,4.4" fill="#c6c6c6" stroke="#d8d8d8" stroke-width="0.7" stroke-linejoin="round"/><polygon points="-7,0.6 -3.2,-7 1.6,-5 1,7.2 -6.4,5" fill="#adadad"/><polygon points="1.9,-5 8.8,-6.3 9.7,-1.9 6.9,6.9 3.8,9.8 0.6,7.6 1.3,-1.3" fill="#4a4a4a"/></g><rect x="527.6" y="490.4" width="16.4" height="22.6" fill="#fff"/><rect x="314.6" y="683.3" width="15.2" height="22.4" fill="#fff"/><rect x="596" y="419.5" width="219" height="303" fill="#fff" opacity="0.055"/><rect x="596" y="419.5" width="219" height="303" fill="none" stroke="#dcdcdc" stroke-width="0.8" opacity="0.15"/><g><path d="M734 298.5 m-52.5 0 a52.5 31 0 1 0 105 0 a52.5 31 0 1 0 -105 0 Z M734 296 m-40 0 a40 22 0 1 1 80 0 a40 22 0 1 1 -80 0 Z" fill="#dedede" fill-rule="evenodd" transform="translate(0,31) rotate(3 734 298)"/><polygon points="726.1,272.4 766.8,280.2 763.5,319 743.4,346 702.2,330 697.8,288.4" fill="#b0b0b0"/><path d="M726.1 272.4 L766.8 280.2 L763.5 319 L743.4 346 L702.2 330 L697.8 288.4 Z M697.8 288.4 L744.6 298.9 L766.8 280.2 M744.6 298.9 L743.4 346 M726.1 272.4 L726.4 309.8 L702.2 330 M726.4 309.8 L763.5 319" fill="none" stroke="#8a8a8a" stroke-width="1"/><path d="M686 311.4 L697 308.5 M694 306.4 L697.4 313.6 M697.6 306 L693.6 314" stroke="#8c8c8c" stroke-width="1.3" fill="none"/><path d="M772.6 337 L788 342.6 L784 338.4 M788 342.6 L782.6 343.2" stroke="#a8a8a8" stroke-width="1" fill="none"/><path d="M696 359 L703.4 351 L703 346.4 M703.4 351 L713.4 349.6" stroke="#8c8c8c" stroke-width="2.6" fill="none"/></g></g></svg>
<span class="t" style="left:527.07px;top:494.61px;font-size:17px;color:#111;transform:scaleX(1.3815);">B</span>
<span class="t" style="left:315.54px;top:687.41px;font-size:17px;color:#111;transform:scaleX(1.1146);">C</span>
<span class="t" style="left:731.50px;top:281.92px;font-size:6px;color:#fff;font-weight:700;transform:rotate(-20deg);">-z</span>
<span class="t" style="left:719.00px;top:316.23px;font-size:8px;color:#fff;font-weight:700;transform:rotate(8deg);">+y</span>
<span class="t" style="left:630.00px;top:429.80px;font-size:15px;color:#fff;opacity:0.04;">Snipping Tool</span>
<div class="b" style="left:816px;top:199.6px;width:1104px;height:33.4px;background:#f36f21;"></div>
<div class="b" style="left:816.2px;top:233px;width:1103.8px;height:519.8px;background:#fff;border-bottom:1px solid #a6a6a6;border-right:1px solid #a6a6a6;"></div>
<div class="b" style="left:816.2px;top:752.8px;width:1104px;height:6px;background:#cccccc;"></div>
<span class="t" style="left:838.47px;top:212.30px;font-size:15px;color:#fff;transform:scaleX(0.9424);">Analysis</span>
<span class="t" style="left:922.32px;top:212.30px;font-size:15px;color:#fff;transform:scaleX(0.9570);">Plates</span>
<span class="t" style="left:993.56px;top:212.30px;font-size:15px;color:#fff;transform:scaleX(1.0103);">Bolts</span>
<div class="b" style="left:1043px;top:205px;width:72px;height:28px;background:#f0f0f0;"></div>
<span class="t" style="left:1059.34px;top:212.30px;font-size:15px;color:#f36f21;transform:scaleX(0.9707);">Welds</span>
<div class="b" style="left:1886px;top:245px;width:21px;height:494px;background:#f0f0f0;"></div>
<div class="b" style="left:1886px;top:434px;width:21px;height:90px;background:#c8c8c8;"></div>
<svg class="b" style="left:1889px;top:252px;" width="14" height="9" viewBox="0 0 14 9"><path d="M2.2 7 L7 2.4 L11.8 7" fill="none" stroke="#9a9a9a" stroke-width="1.5"/></svg>
<svg class="b" style="left:1889px;top:725px;" width="14" height="9" viewBox="0 0 14 9"><path d="M2.2 2 L7 6.6 L11.8 2" fill="none" stroke="#9a9a9a" stroke-width="1.5"/></svg>
<div class="b" style="left:830.2px;top:393.4px;width:941.6px;height:36px;background:#ebebeb;"></div>
<svg class="b" style="left:0;top:0" width="1920" height="760" viewBox="0 0 1920 760" shape-rendering="crispEdges"><path d="M830.2 249.4 H1773.6" stroke="#ababab" stroke-width="1.1"/><path d="M830.2 285.4 H1773.6" stroke="#ababab" stroke-width="1.1"/><path d="M830.2 321.5 H1773.6" stroke="#ababab" stroke-width="1.1"/><path d="M830.2 357.5 H1773.6" stroke="#ababab" stroke-width="1.1"/><path d="M830.2 393.4 H1773.6" stroke="#ababab" stroke-width="1.1"/><path d="M830.2 678.2 H1773.6" stroke="#ababab" stroke-width="1.1"/><path d="M830.2 714.4 H1773.6" stroke="#ababab" stroke-width="1.1"/><path d="M830.2 245 V429.2" stroke="#ababab" stroke-width="1.1"/><path d="M830.2 678.2 V739" stroke="#ababab" stroke-width="1.1"/><path d="M866.7 245 V429.2" stroke="#ababab" stroke-width="1.1"/><path d="M866.7 678.2 V739" stroke="#ababab" stroke-width="1.1"/><path d="M904.2 245 V429.2" stroke="#ababab" stroke-width="1.1"/><path d="M904.2 678.2 V739" stroke="#ababab" stroke-width="1.1"/><path d="M963.2 245 V429.2" stroke="#ababab" stroke-width="1.1"/><path d="M963.2 678.2 V739" stroke="#ababab" stroke-width="1.1"/><path d="M1019.3 245 V429.2" stroke="#ababab" stroke-width="1.1"/><path d="M1019.3 678.2 V739" stroke="#ababab" stroke-width="1.1"/><path d="M1080.6 245 V429.2" stroke="#ababab" stroke-width="1.1"/><path d="M1080.6 678.2 V739" stroke="#ababab" stroke-width="1.1"/><path d="M1153.4 245 V429.2" stroke="#ababab" stroke-width="1.1"/><path d="M1153.4 678.2 V739" stroke="#ababab" stroke-width="1.1"/><path d="M1215.8 245 V429.2" stroke="#ababab" stroke-width="1.1"/><path d="M1215.8 678.2 V739" stroke="#ababab" stroke-width="1.1"/><path d="M1278.3 245 V429.2" stroke="#ababab" stroke-width="1.1"/><path d="M1278.3 678.2 V739" stroke="#ababab" stroke-width="1.1"/><path d="M1334.4 245 V429.2" stroke="#ababab" stroke-width="1.1"/><path d="M1334.4 678.2 V739" stroke="#ababab" stroke-width="1.1"/><path d="M1396.2 245 V429.2" stroke="#ababab" stroke-width="1.1"/><path d="M1396.2 678.2 V739" stroke="#ababab" stroke-width="1.1"/><path d="M1458.7 245 V429.2" stroke="#ababab" stroke-width="1.1"/><path d="M1458.7 678.2 V739" stroke="#ababab" stroke-width="1.1"/><path d="M1521.1 245 V429.2" stroke="#ababab" stroke-width="1.1"/><path d="M1521.1 678.2 V739" stroke="#ababab" stroke-width="1.1"/><path d="M1584.7 245 V429.2" stroke="#ababab" stroke-width="1.1"/><path d="M1584.7 678.2 V739" stroke="#ababab" stroke-width="1.1"/><path d="M1646.6 245 V429.2" stroke="#ababab" stroke-width="1.1"/><path d="M1646.6 678.2 V739" stroke="#ababab" stroke-width="1.1"/><path d="M1708.4 245 V429.2" stroke="#ababab" stroke-width="1.1"/><path d="M1708.4 678.2 V739" stroke="#ababab" stroke-width="1.1"/><path d="M1771.4 245 V429.2" stroke="#ababab" stroke-width="1.1"/><path d="M1771.4 678.2 V739" stroke="#ababab" stroke-width="1.1"/><path d="M1773.6 245 V429.2" stroke="#ababab" stroke-width="1.1"/><path d="M1773.6 678.2 V739" stroke="#ababab" stroke-width="1.1"/><path d="M830.2 429 V678.2" stroke="#ababab" stroke-width="1.1"/><path d="M866.7 429 V678.2" stroke="#ababab" stroke-width="1.1"/><path d="M1772.8 429 V678.2" stroke="#ababab" stroke-width="1.1"/></svg>
<div class="b" style="left:875.2px;top:257.0px;width:21.6px;height:21.6px;background:#fff;border:1px solid #9a9a9a;"></div>
<svg class="b" style="left:876px;top:259.8px;" width="20" height="16" viewBox="0 0 20 16"><path d="M4.4 8 H15.6 M10 2.4 V13.6" stroke="#222" stroke-width="1.8"/></svg>
<svg class="b" style="left:923.4px;top:257.0px;" width="22" height="22" viewBox="0 0 22 22"><defs><radialGradient id="gok" cx="0.5" cy="0.4" r="0.6"><stop offset="0" stop-color="#74dc58"/><stop offset="1" stop-color="#36b034"/></radialGradient></defs><circle cx="11" cy="11" r="10.3" fill="url(#gok)"/><path d="M5.6 11.2 L9.6 15 L16.6 7" fill="none" stroke="#fff" stroke-width="2.6"/></svg>
<span class="t" style="left:1086.40px;top:260.40px;font-size:15px;color:#333;transform:scaleX(0.9268);">S 275</span>
<svg class="b" style="left:1160px;top:262.70000000000005px;" width="9.6" height="10.8" viewBox="0 0 9.6 10.8"><path d="M0 10.6 H9.4 V0.4 Z" fill="#3a3a3a"/></svg>
<span class="t" style="left:1169.36px;top:260.40px;font-size:15px;color:#333;transform:scaleX(1.1075);">6.0</span>
<svg class="b" style="left:1192.6px;top:262.70000000000005px;" width="9.8" height="10.8" viewBox="0 0 9.8 10.8"><path d="M0 0.4 V10.6 H9.6 Z" fill="#3a3a3a"/></svg>
<span class="t" style="left:1222.60px;top:260.40px;font-size:15px;color:#333;transform:scaleX(1.0144);">311</span>
<span class="t" style="left:1285.00px;top:260.40px;font-size:15px;color:#333;transform:scaleX(0.8518);">LE1</span>
<span class="t" style="left:1341.00px;top:260.40px;font-size:15px;color:#333;transform:scaleX(0.9423);">64.0</span>
<span class="t" style="left:1402.80px;top:260.40px;font-size:15px;color:#333;transform:scaleX(0.9315);">0.0</span>
<span class="t" style="left:1465.40px;top:260.40px;font-size:15px;color:#333;transform:scaleX(0.9315);">1.8</span>
<span class="t" style="left:1527.80px;top:260.40px;font-size:15px;color:#333;transform:scaleX(0.9423);">36.9</span>
<span class="t" style="left:1591.40px;top:260.40px;font-size:15px;color:#333;transform:scaleX(0.9836);">-1.8</span>
<span class="t" style="left:1653.20px;top:260.40px;font-size:15px;color:#333;transform:scaleX(0.9423);">15.8</span>
<span class="t" style="left:1715.00px;top:260.40px;font-size:15px;color:#333;transform:scaleX(0.9315);">8.3</span>
<div class="b" style="left:875.2px;top:293.0px;width:21.6px;height:21.6px;background:#fff;border:1px solid #9a9a9a;"></div>
<svg class="b" style="left:876px;top:295.79999999999995px;" width="20" height="16" viewBox="0 0 20 16"><path d="M4.4 8 H15.6 M10 2.4 V13.6" stroke="#222" stroke-width="1.8"/></svg>
<svg class="b" style="left:923.4px;top:293.0px;" width="22" height="22" viewBox="0 0 22 22"><defs><radialGradient id="gno" cx="0.5" cy="0.4" r="0.6"><stop offset="0" stop-color="#ff9068"/><stop offset="1" stop-color="#f0582e"/></radialGradient></defs><circle cx="11" cy="11" r="10.3" fill="url(#gno)"/><path d="M7 7 L15 15 M15 7 L7 15" fill="none" stroke="#fff" stroke-width="2.8"/></svg>
<span class="t" style="left:969.60px;top:296.40px;font-size:15px;color:#333;transform:scaleX(0.8491);">EP1</span>
<span class="t" style="left:1025.60px;top:296.40px;font-size:15px;color:#333;transform:scaleX(0.9906);">WID1b</span>
<span class="t" style="left:1086.40px;top:296.40px;font-size:15px;color:#333;transform:scaleX(0.9268);">S 275</span>
<svg class="b" style="left:1160px;top:298.7px;" width="9.6" height="10.8" viewBox="0 0 9.6 10.8"><path d="M0 10.6 H9.4 V0.4 Z" fill="#3a3a3a"/></svg>
<span class="t" style="left:1169.36px;top:296.40px;font-size:15px;color:#333;transform:scaleX(1.1075);">6.0</span>
<svg class="b" style="left:1192.6px;top:298.7px;" width="9.8" height="10.8" viewBox="0 0 9.8 10.8"><path d="M0 0.4 V10.6 H9.6 Z" fill="#3a3a3a"/></svg>
<span class="t" style="left:1222.60px;top:296.40px;font-size:15px;color:#333;transform:scaleX(0.9693);">120</span>
<span class="t" style="left:1285.00px;top:296.40px;font-size:15px;color:#333;transform:scaleX(0.8518);">LE1</span>
<span class="t" style="left:1341.00px;top:296.40px;font-size:15px;color:#333;transform:scaleX(0.9483);">427.2</span>
<span class="t" style="left:1402.80px;top:296.40px;font-size:15px;color:#333;transform:scaleX(0.9315);">0.2</span>
<span class="t" style="left:1465.40px;top:296.40px;font-size:15px;color:#333;transform:scaleX(0.9780);">-106.1</span>
<span class="t" style="left:1527.80px;top:296.40px;font-size:15px;color:#333;transform:scaleX(0.9423);">45.0</span>
<span class="t" style="left:1591.40px;top:296.40px;font-size:15px;color:#333;transform:scaleX(0.9780);">-234.6</span>
<span class="t" style="left:1653.20px;top:296.40px;font-size:15px;color:#333;transform:scaleX(0.9483);">105.5</span>
<span class="t" style="left:1715.00px;top:296.40px;font-size:15px;color:#333;transform:scaleX(0.9423);">93.0</span>
<div class="b" style="left:875.2px;top:329.1px;width:21.6px;height:21.6px;background:#fff;border:1px solid #9a9a9a;"></div>
<svg class="b" style="left:876px;top:331.9px;" width="20" height="16" viewBox="0 0 20 16"><path d="M4.4 8 H15.6 M10 2.4 V13.6" stroke="#222" stroke-width="1.8"/></svg>
<svg class="b" style="left:923.4px;top:329.1px;" width="22" height="22" viewBox="0 0 22 22"><defs><radialGradient id="gok" cx="0.5" cy="0.4" r="0.6"><stop offset="0" stop-color="#74dc58"/><stop offset="1" stop-color="#36b034"/></radialGradient></defs><circle cx="11" cy="11" r="10.3" fill="url(#gok)"/><path d="M5.6 11.2 L9.6 15 L16.6 7" fill="none" stroke="#fff" stroke-width="2.6"/></svg>
<span class="t" style="left:1086.40px;top:332.50px;font-size:15px;color:#333;transform:scaleX(0.9268);">S 275</span>
<svg class="b" style="left:1160px;top:334.8px;" width="9.6" height="10.8" viewBox="0 0 9.6 10.8"><path d="M0 10.6 H9.4 V0.4 Z" fill="#3a3a3a"/></svg>
<span class="t" style="left:1169.36px;top:332.50px;font-size:15px;color:#333;transform:scaleX(1.1075);">6.0</span>
<svg class="b" style="left:1192.6px;top:334.8px;" width="9.8" height="10.8" viewBox="0 0 9.8 10.8"><path d="M0 0.4 V10.6 H9.6 Z" fill="#3a3a3a"/></svg>
<span class="t" style="left:1222.60px;top:332.50px;font-size:15px;color:#333;transform:scaleX(0.9693);">120</span>
<span class="t" style="left:1285.00px;top:332.50px;font-size:15px;color:#333;transform:scaleX(0.8518);">LE1</span>
<span class="t" style="left:1341.00px;top:332.50px;font-size:15px;color:#333;transform:scaleX(0.9483);">301.5</span>
<span class="t" style="left:1402.80px;top:332.50px;font-size:15px;color:#333;transform:scaleX(0.9315);">0.0</span>
<span class="t" style="left:1465.40px;top:332.50px;font-size:15px;color:#333;transform:scaleX(0.9780);">-182.1</span>
<span class="t" style="left:1527.80px;top:332.50px;font-size:15px;color:#333;transform:scaleX(0.9423);">45.2</span>
<span class="t" style="left:1591.40px;top:332.50px;font-size:15px;color:#333;transform:scaleX(0.9483);">131.2</span>
<span class="t" style="left:1653.20px;top:332.50px;font-size:15px;color:#333;transform:scaleX(0.9423);">74.5</span>
<span class="t" style="left:1715.00px;top:332.50px;font-size:15px;color:#333;transform:scaleX(0.9423);">60.0</span>
<div class="b" style="left:875.2px;top:365.1px;width:21.6px;height:21.6px;background:#fff;border:1px solid #9a9a9a;"></div>
<svg class="b" style="left:876px;top:367.9px;" width="20" height="16" viewBox="0 0 20 16"><path d="M4.4 8 H15.6 M10 2.4 V13.6" stroke="#222" stroke-width="1.8"/></svg>
<svg class="b" style="left:923.4px;top:365.1px;" width="22" height="22" viewBox="0 0 22 22"><defs><radialGradient id="gok" cx="0.5" cy="0.4" r="0.6"><stop offset="0" stop-color="#74dc58"/><stop offset="1" stop-color="#36b034"/></radialGradient></defs><circle cx="11" cy="11" r="10.3" fill="url(#gok)"/><path d="M5.6 11.2 L9.6 15 L16.6 7" fill="none" stroke="#fff" stroke-width="2.6"/></svg>
<span class="t" style="left:969.60px;top:368.50px;font-size:15px;color:#333;transform:scaleX(1.0134);">B-bfl 1</span>
<span class="t" style="left:1025.60px;top:368.50px;font-size:15px;color:#333;transform:scaleX(0.9906);">WID1b</span>
<span class="t" style="left:1086.40px;top:368.50px;font-size:15px;color:#333;transform:scaleX(0.9268);">S 275</span>
<svg class="b" style="left:1160px;top:370.8px;" width="9.6" height="10.8" viewBox="0 0 9.6 10.8"><path d="M0 10.6 H9.4 V0.4 Z" fill="#3a3a3a"/></svg>
<span class="t" style="left:1169.36px;top:368.50px;font-size:15px;color:#333;transform:scaleX(1.1075);">6.0</span>
<svg class="b" style="left:1192.6px;top:370.8px;" width="9.8" height="10.8" viewBox="0 0 9.8 10.8"><path d="M0 0.4 V10.6 H9.6 Z" fill="#3a3a3a"/></svg>
<span class="t" style="left:1222.60px;top:368.50px;font-size:15px;color:#333;transform:scaleX(0.9693);">120</span>
<span class="t" style="left:1285.00px;top:368.50px;font-size:15px;color:#333;transform:scaleX(0.8518);">LE1</span>
<span class="t" style="left:1341.00px;top:368.50px;font-size:15px;color:#333;transform:scaleX(0.9483);">353.3</span>
<span class="t" style="left:1402.80px;top:368.50px;font-size:15px;color:#333;transform:scaleX(0.9315);">0.3</span>
<span class="t" style="left:1465.40px;top:368.50px;font-size:15px;color:#333;transform:scaleX(0.9801);">-59.6</span>
<span class="t" style="left:1527.80px;top:368.50px;font-size:15px;color:#333;transform:scaleX(0.9801);">-24.7</span>
<span class="t" style="left:1591.40px;top:368.50px;font-size:15px;color:#333;transform:scaleX(0.9780);">-199.5</span>
<span class="t" style="left:1653.20px;top:368.50px;font-size:15px;color:#333;transform:scaleX(0.9423);">98.1</span>
<span class="t" style="left:1715.00px;top:368.50px;font-size:15px;color:#333;transform:scaleX(0.9423);">98.1</span>
<div class="b" style="left:875.2px;top:401.0px;width:21.6px;height:21.6px;background:#fff;border:1px solid #9a9a9a;"></div>
<svg class="b" style="left:876px;top:403.79999999999995px;" width="20" height="16" viewBox="0 0 20 16"><path d="M4.4 8 H15.6" stroke="#222" stroke-width="1.8"/></svg>
<svg class="b" style="left:923.4px;top:401.0px;" width="22" height="22" viewBox="0 0 22 22"><defs><radialGradient id="gok" cx="0.5" cy="0.4" r="0.6"><stop offset="0" stop-color="#74dc58"/><stop offset="1" stop-color="#36b034"/></radialGradient></defs><circle cx="11" cy="11" r="10.3" fill="url(#gok)"/><path d="M5.6 11.2 L9.6 15 L16.6 7" fill="none" stroke="#fff" stroke-width="2.6"/></svg>
<span class="t" style="left:1086.40px;top:404.40px;font-size:15px;color:#333;transform:scaleX(0.9268);">S 275</span>
<svg class="b" style="left:1160px;top:406.7px;" width="9.6" height="10.8" viewBox="0 0 9.6 10.8"><path d="M0 10.6 H9.4 V0.4 Z" fill="#3a3a3a"/></svg>
<span class="t" style="left:1169.36px;top:404.40px;font-size:15px;color:#333;transform:scaleX(1.1075);">6.0</span>
<svg class="b" style="left:1192.6px;top:406.7px;" width="9.8" height="10.8" viewBox="0 0 9.8 10.8"><path d="M0 0.4 V10.6 H9.6 Z" fill="#3a3a3a"/></svg>
<span class="t" style="left:1222.60px;top:404.40px;font-size:15px;color:#333;transform:scaleX(0.9693);">120</span>
<span class="t" style="left:1285.00px;top:404.40px;font-size:15px;color:#333;transform:scaleX(0.8518);">LE1</span>
<span class="t" style="left:1341.00px;top:404.40px;font-size:15px;color:#333;transform:scaleX(0.9483);">167.6</span>
<span class="t" style="left:1402.80px;top:404.40px;font-size:15px;color:#333;transform:scaleX(0.9315);">0.0</span>
<span class="t" style="left:1465.40px;top:404.40px;font-size:15px;color:#333;transform:scaleX(1.0042);">-119.9</span>
<span class="t" style="left:1527.80px;top:404.40px;font-size:15px;color:#333;transform:scaleX(0.9801);">-29.7</span>
<span class="t" style="left:1591.40px;top:404.40px;font-size:15px;color:#333;transform:scaleX(0.9423);">60.8</span>
<span class="t" style="left:1653.20px;top:404.40px;font-size:15px;color:#333;transform:scaleX(0.9423);">46.6</span>
<span class="t" style="left:1715.00px;top:404.40px;font-size:15px;color:#333;transform:scaleX(0.9423);">40.1</span>
<div class="b" style="left:875.2px;top:685.8000000000001px;width:21.6px;height:21.6px;background:#fff;border:1px solid #9a9a9a;"></div>
<svg class="b" style="left:876px;top:688.6px;" width="20" height="16" viewBox="0 0 20 16"><path d="M4.4 8 H15.6 M10 2.4 V13.6" stroke="#222" stroke-width="1.8"/></svg>
<svg class="b" style="left:923.4px;top:685.8000000000001px;" width="22" height="22" viewBox="0 0 22 22"><defs><radialGradient id="gok" cx="0.5" cy="0.4" r="0.6"><stop offset="0" stop-color="#74dc58"/><stop offset="1" stop-color="#36b034"/></radialGradient></defs><circle cx="11" cy="11" r="10.3" fill="url(#gok)"/><path d="M5.6 11.2 L9.6 15 L16.6 7" fill="none" stroke="#fff" stroke-width="2.6"/></svg>
<span class="t" style="left:969.60px;top:689.20px;font-size:15px;color:#333;transform:scaleX(1.0101);">C-bfl 1</span>
<span class="t" style="left:1025.60px;top:689.20px;font-size:15px;color:#333;transform:scaleX(0.8600);">STIFF2a</span>
<span class="t" style="left:1086.40px;top:689.20px;font-size:15px;color:#333;transform:scaleX(0.9268);">S 355</span>
<svg class="b" style="left:1160px;top:691.5000000000001px;" width="9.6" height="10.8" viewBox="0 0 9.6 10.8"><path d="M0 10.6 H9.4 V0.4 Z" fill="#3a3a3a"/></svg>
<span class="t" style="left:1169.54px;top:689.20px;font-size:15px;color:#333;transform:scaleX(1.0984);">5.0</span>
<svg class="b" style="left:1192.6px;top:691.5000000000001px;" width="9.8" height="10.8" viewBox="0 0 9.8 10.8"><path d="M0 0.4 V10.6 H9.6 Z" fill="#3a3a3a"/></svg>
<span class="t" style="left:1222.60px;top:689.20px;font-size:15px;color:#333;transform:scaleX(0.9693);">71</span>
<span class="t" style="left:1285.00px;top:689.20px;font-size:15px;color:#333;transform:scaleX(0.8518);">LE1</span>
<span class="t" style="left:1341.00px;top:689.20px;font-size:15px;color:#333;transform:scaleX(0.9423);">46.2</span>
<span class="t" style="left:1402.80px;top:689.20px;font-size:15px;color:#333;transform:scaleX(0.9315);">0.0</span>
<span class="t" style="left:1465.40px;top:689.20px;font-size:15px;color:#333;transform:scaleX(1.0131);">-11.5</span>
<span class="t" style="left:1527.80px;top:689.20px;font-size:15px;color:#333;transform:scaleX(0.9801);">-21.9</span>
<span class="t" style="left:1591.40px;top:689.20px;font-size:15px;color:#333;transform:scaleX(0.9801);">-13.7</span>
<span class="t" style="left:1653.20px;top:689.20px;font-size:15px;color:#333;transform:scaleX(0.9423);">10.6</span>
<span class="t" style="left:1715.00px;top:689.20px;font-size:15px;color:#333;transform:scaleX(0.9315);">7.6</span>
<div class="b" style="left:875.2px;top:722.0px;width:21.6px;height:21.6px;background:#fff;border:1px solid #9a9a9a;clip-path:inset(0 0 4.600000000000023px 0);"></div>
<svg class="b" style="left:876px;top:724.8px;clip-path:inset(0 0 4.600000000000023px 0);" width="20" height="16" viewBox="0 0 20 16"><path d="M4.4 8 H15.6 M10 2.4 V13.6" stroke="#222" stroke-width="1.8"/></svg>
<svg class="b" style="left:923.4px;top:722.0px;clip-path:inset(0 0 5.0px 0);" width="22" height="22" viewBox="0 0 22 22"><defs><radialGradient id="gok" cx="0.5" cy="0.4" r="0.6"><stop offset="0" stop-color="#74dc58"/><stop offset="1" stop-color="#36b034"/></radialGradient></defs><circle cx="11" cy="11" r="10.3" fill="url(#gok)"/><path d="M5.6 11.2 L9.6 15 L16.6 7" fill="none" stroke="#fff" stroke-width="2.6"/></svg>
<span class="t" style="left:1086.40px;top:725.40px;font-size:15px;color:#333;transform:scaleX(0.9268);clip-path:inset(0 0 1.4px 0);">S 355</span>
<svg class="b" style="left:1160px;top:727.7px;" width="9.6" height="10.8" viewBox="0 0 9.6 10.8"><path d="M0 10.6 H9.4 V0.4 Z" fill="#3a3a3a"/></svg>
<span class="t" style="left:1169.54px;top:725.40px;font-size:15px;color:#333;transform:scaleX(1.0984);clip-path:inset(0 0 1.4px 0);">5.0</span>
<svg class="b" style="left:1192.6px;top:727.7px;" width="9.8" height="10.8" viewBox="0 0 9.8 10.8"><path d="M0 0.4 V10.6 H9.6 Z" fill="#3a3a3a"/></svg>
<span class="t" style="left:1222.60px;top:725.40px;font-size:15px;color:#333;transform:scaleX(0.9693);clip-path:inset(0 0 1.4px 0);">71</span>
<span class="t" style="left:1285.00px;top:725.40px;font-size:15px;color:#333;transform:scaleX(0.8518);clip-path:inset(0 0 1.4px 0);">LE1</span>
<span class="t" style="left:1341.00px;top:725.40px;font-size:15px;color:#333;transform:scaleX(0.9423);clip-path:inset(0 0 1.4px 0);">51.5</span>
<span class="t" style="left:1402.80px;top:725.40px;font-size:15px;color:#333;transform:scaleX(0.9315);clip-path:inset(0 0 1.4px 0);">0.0</span>
<span class="t" style="left:1465.40px;top:725.40px;font-size:15px;color:#333;transform:scaleX(0.9801);clip-path:inset(0 0 1.4px 0);">-20.7</span>
<span class="t" style="left:1527.80px;top:725.40px;font-size:15px;color:#333;transform:scaleX(0.9423);clip-path:inset(0 0 1.4px 0);">20.0</span>
<span class="t" style="left:1591.40px;top:725.40px;font-size:15px;color:#333;transform:scaleX(0.9423);clip-path:inset(0 0 1.4px 0);">18.5</span>
<span class="t" style="left:1653.20px;top:725.40px;font-size:15px;color:#333;transform:scaleX(0.9796);clip-path:inset(0 0 1.4px 0);">11.8</span>
<span class="t" style="left:1715.00px;top:725.40px;font-size:15px;color:#333;transform:scaleX(0.9315);clip-path:inset(0 0 1.4px 0);">8.1</span>
<div class="b" style="left:867.2px;top:429.8px;width:905px;height:248px;background:#fff;"></div>
<svg class="b" style="left:844px;top:530px;" width="10" height="13" viewBox="0 0 10 13"><path d="M1.6 1.2 L7.6 6.4 L1.6 11.6" fill="none" stroke="#333" stroke-width="1.5"/></svg>
<div class="b" style="left:1751.3px;top:431px;width:21.3px;height:226.5px;background:#f0f0f0;"></div>
<div class="b" style="left:1753.2px;top:450.2px;width:17px;height:108px;background:#c1c1c1;"></div>
<svg class="b" style="left:1757px;top:437.6px;" width="9" height="6" viewBox="0 0 9 6"><path d="M0 5.4 H9 L4.5 0 Z" fill="#a3a3a3"/></svg>
<svg class="b" style="left:1757px;top:643.4px;" width="9" height="6" viewBox="0 0 9 6"><path d="M0 0 H9 L4.5 5.4 Z" fill="#505050"/></svg>
<div class="b" style="left:867.2px;top:658px;width:884px;height:19.6px;background:#f0f0f0;"></div>
<div class="b" style="left:888px;top:660px;width:812px;height:15.6px;background:#c1c1c1;"></div>
<svg class="b" style="left:875.4px;top:663px;" width="6" height="9" viewBox="0 0 6 9"><path d="M5.4 0 V9 L0 4.5 Z" fill="#a3a3a3"/></svg>
<svg class="b" style="left:1737.4px;top:663px;" width="6" height="9" viewBox="0 0 6 9"><path d="M0 0 V9 L5.4 4.5 Z" fill="#505050"/></svg>
<span class="t" style="left:887.49px;top:444.90px;font-size:15px;color:#111;font-weight:700;transform:scaleX(0.9917);">Weld resistance check</span>
<span class="t" style="left:1051.56px;top:444.90px;font-size:15px;color:#222;transform:scaleX(1.0076);">(EN 1993-1-8 4.5.3.2)</span>
<span class="t" style="left:893.94px;top:477.43px;font-size:18px;color:#383838;font-style:italic;font-family:'Liberation Serif',serif;transform:scaleX(1.0436);">σ</span>
<span class="t" style="left:904.63px;top:485.03px;font-size:12.5px;color:#383838;font-style:italic;font-family:'Liberation Serif',serif;transform:scaleX(1.2214);">w,Rd</span>
<div class="b" style="left:942.5px;top:485.3px;width:12.0px;height:1.1px;background:#383838;"></div>
<div class="b" style="left:942.5px;top:489.1px;width:12.0px;height:1.1px;background:#383838;"></div>
<span class="t" style="left:961.36px;top:477.43px;font-size:18px;color:#383838;font-style:italic;font-family:'Liberation Serif',serif;transform:scaleX(1.1639);">f</span>
<span class="t" style="left:968.72px;top:485.03px;font-size:12.5px;color:#383838;font-style:italic;font-family:'Liberation Serif',serif;transform:scaleX(1.2558);">u</span>
<span class="t" style="left:980.00px;top:477.43px;font-size:18px;color:#383838;font-family:'Liberation Serif',serif;transform:scaleX(1.3996);">/</span>
<span class="t" style="left:987.94px;top:477.43px;font-size:18px;color:#383838;font-family:'Liberation Serif',serif;transform:scaleX(1.0816);">(</span>
<span class="t" style="left:995.35px;top:477.43px;font-size:18px;color:#383838;font-style:italic;font-family:'Liberation Serif',serif;transform:scaleX(1.1919);">β</span>
<span class="t" style="left:1005.70px;top:485.03px;font-size:12.5px;color:#383838;font-style:italic;font-family:'Liberation Serif',serif;transform:scaleX(1.0067);">w</span>
<span class="t" style="left:1015.55px;top:477.43px;font-size:18px;color:#383838;font-style:italic;font-family:'Liberation Serif',serif;transform:scaleX(1.3962);">γ</span>
<span class="t" style="left:1026.16px;top:485.03px;font-size:12.5px;color:#383838;font-style:italic;font-family:'Liberation Serif',serif;transform:scaleX(1.0779);">M</span>
<span class="t" style="left:1037.83px;top:485.03px;font-size:12.5px;color:#383838;font-family:'Liberation Serif',serif;transform:scaleX(1.3969);">2</span>
<span class="t" style="left:1046.83px;top:477.43px;font-size:18px;color:#383838;font-family:'Liberation Serif',serif;transform:scaleX(1.1465);">)</span>
<div class="b" style="left:1060px;top:485.3px;width:12.5px;height:1.1px;background:#383838;"></div>
<div class="b" style="left:1060px;top:489.1px;width:12.5px;height:1.1px;background:#383838;"></div>
<span class="t" style="left:1093.22px;top:478.80px;font-size:15px;color:#222;transform:scaleX(1.0171);">360.0</span>
<span class="t" style="left:1145.79px;top:478.80px;font-size:15px;color:#222;transform:scaleX(0.9793);">MPa</span>
<span class="t" style="left:1192.01px;top:480.50px;font-size:13px;color:#222;transform:scaleX(1.1875);">≥</span>
<span class="t" style="left:1216.25px;top:477.43px;font-size:18px;color:#383838;font-style:italic;font-family:'Liberation Serif',serif;transform:scaleX(1.0323);">σ</span>
<span class="t" style="left:1226.84px;top:485.03px;font-size:12.5px;color:#383838;font-style:italic;font-family:'Liberation Serif',serif;transform:scaleX(1.2007);">w,Ed</span>
<div class="b" style="left:1263.8px;top:485.3px;width:12.400000000000091px;height:1.1px;background:#383838;"></div>
<div class="b" style="left:1263.8px;top:489.1px;width:12.400000000000091px;height:1.1px;background:#383838;"></div>
<span class="t" style="left:1282.53px;top:477.43px;font-size:18px;color:#383838;font-family:'Liberation Serif',serif;transform:scaleX(0.9482);">[</span>
<span class="t" style="left:1287.43px;top:477.43px;font-size:18px;color:#383838;font-style:italic;font-family:'Liberation Serif',serif;transform:scaleX(1.0660);">σ</span>
<span class="t" style="left:1298.34px;top:475.03px;font-size:12.5px;color:#383838;font-family:'Liberation Serif',serif;transform:scaleX(1.1974);">2</span>
<span class="t" style="left:1299.00px;top:488.21px;font-size:10.5px;color:#383838;transform:scaleX(0.8889);">⊥</span>
<span class="t" style="left:1313.80px;top:477.43px;font-size:18px;color:#383838;font-family:'Liberation Serif',serif;transform:scaleX(1.3371);">+</span>
<span class="t" style="left:1331.61px;top:478.26px;font-size:17px;color:#383838;font-family:'Liberation Serif',serif;transform:scaleX(1.0965);">3</span>
<span class="t" style="left:1341.14px;top:477.43px;font-size:18px;color:#383838;font-family:'Liberation Serif',serif;transform:scaleX(1.0816);">(</span>
<span class="t" style="left:1348.34px;top:477.43px;font-size:18px;color:#383838;font-style:italic;font-family:'Liberation Serif',serif;transform:scaleX(1.1530);">τ</span>
<span class="t" style="left:1357.34px;top:475.03px;font-size:12.5px;color:#383838;font-family:'Liberation Serif',serif;transform:scaleX(1.1974);">2</span>
<span class="t" style="left:1357.60px;top:488.21px;font-size:10.5px;color:#383838;transform:scaleX(0.8889);">⊥</span>
<span class="t" style="left:1371.29px;top:477.43px;font-size:18px;color:#383838;font-family:'Liberation Serif',serif;transform:scaleX(1.3491);">+</span>
<span class="t" style="left:1389.54px;top:477.43px;font-size:18px;color:#383838;font-style:italic;font-family:'Liberation Serif',serif;transform:scaleX(1.1530);">τ</span>
<span class="t" style="left:1399.34px;top:475.03px;font-size:12.5px;color:#383838;font-family:'Liberation Serif',serif;transform:scaleX(1.1974);">2</span>
<span class="t" style="left:1397.70px;top:489.48px;font-size:9px;color:#383838;transform:scaleX(1.3696);">||</span>
<span class="t" style="left:1408.17px;top:477.43px;font-size:18px;color:#383838;font-family:'Liberation Serif',serif;transform:scaleX(1.0816);">)</span>
<span class="t" style="left:1414.38px;top:477.43px;font-size:18px;color:#383838;font-family:'Liberation Serif',serif;transform:scaleX(0.9482);">]</span>
<span class="t" style="left:1419.47px;top:474.03px;font-size:12.5px;color:#383838;font-family:'Liberation Serif',serif;transform:scaleX(1.1050);">0.5</span>
<div class="b" style="left:1444.5px;top:485.3px;width:12.5px;height:1.1px;background:#383838;"></div>
<div class="b" style="left:1444.5px;top:489.1px;width:12.5px;height:1.1px;background:#383838;"></div>
<span class="t" style="left:1477.66px;top:478.80px;font-size:15px;color:#222;">167.6</span>
<span class="t" style="left:1529.97px;top:478.80px;font-size:15px;color:#222;">MPa</span>
<span class="t" style="left:893.94px;top:512.92px;font-size:18px;color:#383838;font-style:italic;font-family:'Liberation Serif',serif;transform:scaleX(1.0436);">σ</span>
<span class="t" style="left:905.00px;top:522.71px;font-size:10.5px;color:#383838;transform:scaleX(1.0159);">⊥</span>
<span class="t" style="left:913.08px;top:520.53px;font-size:12.5px;color:#383838;font-style:italic;font-family:'Liberation Serif',serif;transform:scaleX(1.2570);">,Rd</span>
<div class="b" style="left:942.5px;top:520.8px;width:12.0px;height:1.1px;background:#383838;"></div>
<div class="b" style="left:942.5px;top:524.6px;width:12.0px;height:1.1px;background:#383838;"></div>
<span class="t" style="left:960.46px;top:513.76px;font-size:17px;color:#383838;font-family:'Liberation Serif',serif;transform:scaleX(1.1354);">0.9</span>
<span class="t" style="left:985.37px;top:512.92px;font-size:18px;color:#383838;font-style:italic;font-family:'Liberation Serif',serif;transform:scaleX(1.1348);">f</span>
<span class="t" style="left:992.38px;top:520.53px;font-size:12.5px;color:#383838;font-style:italic;font-family:'Liberation Serif',serif;transform:scaleX(1.3138);">u</span>
<span class="t" style="left:1003.80px;top:512.92px;font-size:18px;color:#383838;font-family:'Liberation Serif',serif;transform:scaleX(1.3996);">/</span>
<span class="t" style="left:1012.05px;top:512.92px;font-size:18px;color:#383838;font-style:italic;font-family:'Liberation Serif',serif;transform:scaleX(1.3962);">γ</span>
<span class="t" style="left:1022.65px;top:520.53px;font-size:12.5px;color:#383838;font-style:italic;font-family:'Liberation Serif',serif;transform:scaleX(1.0330);">M</span>
<span class="t" style="left:1033.88px;top:520.53px;font-size:12.5px;color:#383838;font-family:'Liberation Serif',serif;transform:scaleX(1.3171);">2</span>
<div class="b" style="left:1048.8px;top:520.8px;width:12.400000000000091px;height:1.1px;background:#383838;"></div>
<div class="b" style="left:1048.8px;top:524.6px;width:12.400000000000091px;height:1.1px;background:#383838;"></div>
<span class="t" style="left:1081.04px;top:514.30px;font-size:15px;color:#222;transform:scaleX(1.0103);">259.2</span>
<span class="t" style="left:1133.77px;top:514.30px;font-size:15px;color:#222;">MPa</span>
<span class="t" style="left:1180.32px;top:516.00px;font-size:13px;color:#222;transform:scaleX(1.1717);">≥</span>
<div class="b" style="left:1206px;top:514.6px;width:1px;height:18px;background:#383838;"></div>
<span class="t" style="left:1208.94px;top:512.92px;font-size:18px;color:#383838;font-style:italic;font-family:'Liberation Serif',serif;transform:scaleX(1.0436);">σ</span>
<span class="t" style="left:1220.40px;top:522.71px;font-size:10.5px;color:#383838;transform:scaleX(1.0159);">⊥</span>
<div class="b" style="left:1234px;top:514.6px;width:1px;height:18px;background:#383838;"></div>
<div class="b" style="left:1242.5px;top:520.8px;width:12.5px;height:1.1px;background:#383838;"></div>
<div class="b" style="left:1242.5px;top:524.6px;width:12.5px;height:1.1px;background:#383838;"></div>
<span class="t" style="left:1276.34px;top:514.30px;font-size:15px;color:#222;transform:scaleX(1.0124);">119.9</span>
<span class="t" style="left:1327.97px;top:514.30px;font-size:15px;color:#222;">MPa</span>
<span class="t" style="left:937.52px;top:547.60px;font-size:15px;color:#222;">where:</span>
<span class="t" style="left:937.76px;top:569.42px;font-size:18px;color:#383838;font-style:italic;font-family:'Liberation Serif',serif;transform:scaleX(1.1639);">f</span>
<span class="t" style="left:944.99px;top:577.03px;font-size:12.5px;color:#383838;font-style:italic;font-family:'Liberation Serif',serif;transform:scaleX(1.2945);">u</span>
<div class="b" style="left:961.2px;top:577.3px;width:11.799999999999955px;height:1.1px;background:#383838;"></div>
<div class="b" style="left:961.2px;top:581.1px;width:11.799999999999955px;height:1.1px;background:#383838;"></div>
<span class="t" style="left:979.43px;top:570.80px;font-size:15px;color:#222;transform:scaleX(0.9892);">360.0 MPa</span>
<span class="t" style="left:1067.50px;top:570.80px;font-size:15px;color:#222;">– Ultimate strength</span>
<div class="b" style="left:934.2px;top:591.2px;width:261.6px;height:2.3px;background:#ee1515;"></div>
<span class="t" style="left:937.81px;top:599.12px;font-size:18px;color:#383838;font-style:italic;font-family:'Liberation Serif',serif;transform:scaleX(1.0835);">β</span>
<span class="t" style="left:947.66px;top:606.73px;font-size:12.5px;color:#383838;font-style:italic;font-family:'Liberation Serif',serif;transform:scaleX(1.1325);">w</span>
<div class="b" style="left:964.5px;top:607.0px;width:12.5px;height:1.1px;background:#383838;"></div>
<div class="b" style="left:964.5px;top:610.8000000000001px;width:12.5px;height:1.1px;background:#383838;"></div>
<span class="t" style="left:982.41px;top:600.50px;font-size:15px;color:#222;transform:scaleX(1.0064);">0.80</span>
<span class="t" style="left:1067.50px;top:600.50px;font-size:15px;color:#222;">– appropriate correlation factor taken from Table 4.1</span>
<span class="t" style="left:937.10px;top:628.72px;font-size:18px;color:#383838;font-style:italic;font-family:'Liberation Serif',serif;transform:scaleX(1.2426);">γ</span>
<span class="t" style="left:947.16px;top:636.33px;font-size:12.5px;color:#383838;font-style:italic;font-family:'Liberation Serif',serif;transform:scaleX(1.0779);">M</span>
<span class="t" style="left:958.88px;top:636.33px;font-size:12.5px;color:#383838;font-family:'Liberation Serif',serif;transform:scaleX(1.3171);">2</span>
<div class="b" style="left:973.8px;top:636.5999999999999px;width:12.400000000000091px;height:1.1px;background:#383838;"></div>
<div class="b" style="left:973.8px;top:640.4px;width:12.400000000000091px;height:1.1px;background:#383838;"></div>
<span class="t" style="left:991.35px;top:630.10px;font-size:15px;color:#222;">1.25</span>
<span class="t" style="left:1067.50px;top:630.10px;font-size:15px;color:#222;transform:scaleX(1.0055);">– Safety factor</span>
<div class="b" style="left:816.5px;top:758.5px;width:1104px;height:230px;background:#fff;"></div>
<div class="b" style="left:820px;top:763.4px;width:30px;height:29.6px;background:linear-gradient(#f4f4f4,#cfcfcf);border:1px solid #bdbdbd;box-shadow:inset 0 0 0 1px #fff;"></div>
<svg class="b" style="left:820px;top:763.4px;" width="30" height="30" viewBox="0 0 30 30"><g stroke="#555" stroke-width="1.2" fill="none"><path d="M12 12.4 L7 7.4 M7 11 V7.4 H10.6 M18 12.4 L23 7.4 M19.4 7.4 H23 V11 M12 17.6 L7 22.6 M7 19 V22.6 H10.6 M18 17.6 L23 22.6 M19.4 22.6 H23 V19"/></g></svg>
<div class="b" style="left:1179px;top:770px;width:47.4px;height:207px;background:#dcdcdc;border:1px solid #8c8c8c;"></div>
<div class="b" style="left:1179.6px;top:862px;width:46.2px;height:21.6px;background:#90e030;"></div>
<div class="b" style="left:1179px;top:883.4px;width:47.4px;height:2px;background:#5a2d0c;"></div>
<div class="b" style="left:1195.6px;top:883.4px;width:13.6px;height:2px;background:#f37021;"></div>
<div class="b" style="left:1201.7px;top:885.4px;width:1.2px;height:91.4px;background:#000;"></div>
<span class="t" style="left:1619.01px;top:769.74px;font-size:10px;color:#111;transform:scaleX(0.9584);">Equivalent stress [MPa]</span>
<svg class="b" style="left:0;top:0" width="1920" height="988" viewBox="0 0 1920 988"><polygon points="1619.3,878.2 1687.1,878.2 1687.1,841.5 1822.4,841.5 1822.4,878.2 1889.8,878.2 1889.8,976.5 1619.3,976.5" fill="#93d3fb"/><path d="M1687.1 878.2 V976.5 M1754.6 841.5 V976.5 M1822.4 878.2 V976.5 M1619.3 878.2 V976.5 M1889.8 878.2 V976.5" stroke="#6f9cba" stroke-width="0.9" fill="none"/><path d="M1619.3 976.5 H1889.8" stroke="#555" stroke-width="1" fill="none"/><path d="M1619.3 878.2 H1687.1 V841.5 H1822.4 V878.2 H1889.8" stroke="#111" stroke-width="1.4" fill="none"/></svg>
<span class="t" style="left:1687.39px;top:828.29px;font-size:12.3px;color:#111;transform:scaleX(0.9692);">167.6</span>
<span class="t" style="left:1792.48px;top:865.39px;font-size:12.3px;color:#111;transform:scaleX(0.9786);">121.2</span>
<span class="t" style="left:29.03px;top:1003.30px;font-size:15px;color:#8c8c8c;font-weight:700;transform:scaleX(0.9647);">Design code:</span>
<span class="t" style="left:123.93px;top:1003.30px;font-size:15px;color:#fff;font-weight:700;transform:scaleX(1.0625);">EN</span>
<span class="t" style="left:169.65px;top:1003.30px;font-size:15px;color:#8c8c8c;font-weight:700;transform:scaleX(0.9479);">Analysis:</span>
<span class="t" style="left:237.08px;top:1003.30px;font-size:15px;color:#fff;font-weight:700;transform:scaleX(0.9607);">Stress, strain</span>
<span class="t" style="left:352.01px;top:1003.30px;font-size:15px;color:#8c8c8c;font-weight:700;transform:scaleX(0.9846);">Load effects:</span>
<span class="t" style="left:448.00px;top:1003.30px;font-size:15px;color:#fff;font-weight:700;transform:scaleX(0.9932);">Equilibrium not required</span>
<span class="t" style="left:644.08px;top:1003.30px;font-size:15px;color:#8c8c8c;font-weight:700;transform:scaleX(1.0211);">Units:</span>
<span class="t" style="left:694.90px;top:1003.30px;font-size:15px;color:#fff;font-weight:700;transform:scaleX(1.1108);">mm</span>
<span class="t" style="left:1765.72px;top:1002.76px;font-size:16px;color:#fff;transform:scaleX(0.9430);"><span style="color:#f36f21">www.</span>ideastatica<span style="color:#f36f21">.com</span></span>
<div class="b" style="left:745px;top:1030px;width:61px;height:3px;background:#3c3c3c;"></div></div></body></html>
